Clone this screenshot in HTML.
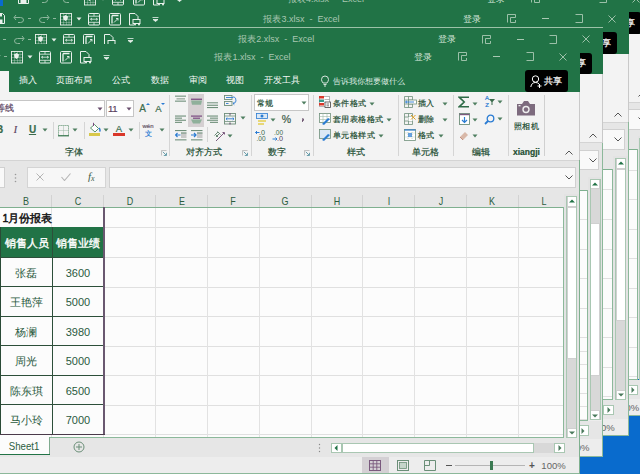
<!DOCTYPE html><html><head><meta charset="utf-8"><style>
html,body{margin:0;padding:0;}
body{width:640px;height:474px;overflow:hidden;position:relative;background:#096bcd;font-family:"Liberation Sans",sans-serif;}
.w{position:absolute;left:0;top:0;width:640px;height:474px;}
.clip{position:absolute;overflow:hidden;}
.clip div,.clip svg{position:absolute;}
.t{white-space:nowrap;}
.rb .t{-webkit-text-stroke:0.2px currentColor;}
</style></head><body><div class="clip" style="left:3.200000000000003px;top:-13.799999999999997px;width:649.8px;height:430.2px"><div style="left:70.3px;top:-44px;width:640px;height:474px"><div style="left:-200px;top:44px;width:779.5px;height:47.5px;background:#217346"></div><svg style="left:-36px;top:50px;" width="12" height="12" viewBox="0 0 12 12"><path d="M3 3 L1 5.5 L3 8 M1.2 5.5 H7.5 Q10.5 5.5 10.5 8 Q10.5 10.5 7.5 10.5 H5" fill="none" stroke="#8fb89e" stroke-width="1"/></svg><svg style="left:-11px;top:50px;" width="12" height="12" viewBox="0 0 12 12"><path d="M9 3 L11 5.5 L9 8 M10.8 5.5 H4.5 Q1.5 5.5 1.5 8 Q1.5 10.5 4.5 10.5 H7" fill="none" stroke="#8fb89e" stroke-width="1"/></svg><svg style="left:-21px;top:56px;" width="4" height="2" viewBox="0 0 4 2"><rect width="3" height="1" fill="#8fb89e"/></svg><svg style="left:-55.5px;top:51px;" width="11" height="11" viewBox="0 0 11 11"><path d="M0.5 0.5H8.5L10.5 2.5V10.5H0.5Z" fill="none" stroke="#e9f1ec"/><rect x="3" y="0.5" width="5" height="3" fill="#e9f1ec"/><rect x="2.5" y="6.5" width="6" height="4" fill="#e9f1ec"/></svg><svg style="left:4px;top:56px;" width="4" height="2" viewBox="0 0 4 2"><rect width="3" height="1" fill="#8fb89e"/></svg><svg style="left:11px;top:51px;" width="13" height="13" viewBox="0 0 13 13"><rect x="0.5" y="0.5" width="11" height="11.5" fill="none" stroke="#e9f1ec" stroke-width="0.9"/><path d="M0.5 3.5H11.5M0.5 6.5H11.5M0.5 9.5H11.5M3.5 0.5V12M6.5 0.5V12M9 0.5V12" stroke="#e9f1ec" stroke-width="0.6" stroke-dasharray="1 1"/><path d="M3 3.5L5.5 2L8 3.5L7.5 6.5L5.5 8L3.5 6.5Z" fill="#e9f1ec"/></svg><svg style="left:27px;top:55px;" width="6" height="4" viewBox="0 0 6 4"><path d="M0.5 0.5 L5.5 0.5 L3 3.5 Z" fill="#e9f1ec"/></svg><svg style="left:39px;top:51px;" width="12" height="13" viewBox="0 0 12 13"><rect x="0.5" y="0.5" width="11" height="11.5" rx="1" fill="none" stroke="#e9f1ec"/><path d="M0.5 3.2H11.5M0.5 9.3H11.5M6 0.5V3.2M6 9.3V12" stroke="#e9f1ec" stroke-width="0.8"/><path d="M2.5 6.2H9.5M4 5L2.5 6.2L4 7.4M8 5L9.5 6.2L8 7.4" stroke="#e9f1ec" stroke-width="0.8" fill="none"/></svg><svg style="left:59.5px;top:51px;" width="12" height="13" viewBox="0 0 12 13"><rect x="0.5" y="0.5" width="11" height="11.5" rx="1" fill="none" stroke="#e9f1ec"/><path d="M3 2.5V10.5M3 2.5H9.5" stroke="#e9f1ec" stroke-width="1.3" fill="none"/><path d="M5 9.5L9 5.5M7 5.5H9V7.5" stroke="#e9f1ec" stroke-width="0.9" fill="none"/></svg><svg style="left:80px;top:51px;" width="12" height="13" viewBox="0 0 12 13"><path d="M0.5 0.5H6L9 3.5V6M0.5 0.5V12H5" fill="none" stroke="#e9f1ec"/><rect x="4" y="6.5" width="7" height="4" fill="none" stroke="#e9f1ec"/><circle cx="6" cy="11.5" r="1" fill="#e9f1ec"/><circle cx="10" cy="11.5" r="1" fill="#e9f1ec"/></svg><svg style="left:103px;top:55px;" width="7" height="5" viewBox="0 0 7 5"><path d="M0.5 0.5H6.5M1 2.5L3.5 4.5L6 2.5Z" stroke="#e9f1ec" stroke-width="0.8" fill="#e9f1ec"/></svg><div class="t" style="left:152.5px;width:200px;text-align:center;top:50.5px;line-height:13px;font-size:9px;color:#a9c7b2;">报表4.xlsx&nbsp; -&nbsp; Excel</div><div class="t" style="left:323px;width:200px;text-align:center;top:50.5px;line-height:13px;font-size:9px;color:#d5e5da;">登录</div><svg style="left:458px;top:52px;" width="10" height="9" viewBox="0 0 10 9"><path d="M0.5 8.5V0.5H8.5V3.5H3.5V8.5H8.5V6" fill="none" stroke="#a9c8b3" stroke-width="0.9"/></svg><div style="left:493px;top:56px;width:7px;height:1px;background:#a9c8b3"></div><svg style="left:525.5px;top:52px;" width="8" height="9" viewBox="0 0 8 9"><path d="M0.5 0.5H7.5V8.5H0.5" fill="none" stroke="#a9c8b3" stroke-width="0.9"/></svg><svg style="left:558.5px;top:52.5px;" width="8" height="8" viewBox="0 0 8 8"><path d="M0.5 0.5L7.5 7.5M7.5 0.5L0.5 7.5" stroke="#a9c8b3" stroke-width="0.9"/></svg><div style="left:-200px;top:70.5px;width:208.8px;height:21px;background:#f3f3f3"></div><div class="t" style="left:-72.0px;width:200px;text-align:center;top:74.3px;line-height:13px;font-size:9px;color:#f2f7f4;">插入</div><div class="t" style="left:-25.625px;width:200px;text-align:center;top:74.3px;line-height:13px;font-size:9px;color:#f2f7f4;">页面布局</div><div class="t" style="left:21.25px;width:200px;text-align:center;top:74.3px;line-height:13px;font-size:9px;color:#f2f7f4;">公式</div><div class="t" style="left:59.875px;width:200px;text-align:center;top:74.3px;line-height:13px;font-size:9px;color:#f2f7f4;">数据</div><div class="t" style="left:97.75px;width:200px;text-align:center;top:74.3px;line-height:13px;font-size:9px;color:#f2f7f4;">审阅</div><div class="t" style="left:135.375px;width:200px;text-align:center;top:74.3px;line-height:13px;font-size:9px;color:#f2f7f4;">视图</div><div class="t" style="left:182.25px;width:200px;text-align:center;top:74.3px;line-height:13px;font-size:9px;color:#f2f7f4;">开发工具</div><svg style="left:320.5px;top:74.5px;" width="8" height="12" viewBox="0 0 8 12"><path d="M2 8 Q0.5 6 0.5 4.5 A3.5 3.5 0 0 1 7.5 4.5 Q7.5 6 6 8 Z M2.5 9.5H5.5M3 11H5" fill="none" stroke="#e9f1ec" stroke-width="0.9"/></svg><div class="t" style="left:332.8px;top:74.64999999999999px;line-height:12.3px;font-size:8.3px;color:#dfeae2;">告诉我你想要做什么</div><div style="left:525px;top:70px;width:43px;height:21.8px;background:#000;border-radius:3px"></div><svg style="left:530px;top:75px;" width="13" height="13" viewBox="0 0 13 13"><circle cx="5.5" cy="4" r="3.2" fill="none" stroke="#fff" stroke-width="1"/><path d="M0.8 12 Q1.5 7.5 5.5 7.5 Q8 7.5 9 9" fill="none" stroke="#fff" stroke-width="1"/><path d="M9.5 9V13M7.5 11H11.5" stroke="#fff" stroke-width="1"/></svg><div class="t" style="left:544px;top:74.5px;line-height:13px;font-size:9px;color:#f4f4f4;-webkit-text-stroke:0.2px #fff">共享</div><div style="left:-200px;top:91.5px;width:779.5px;height:68px;background:#f3f3f3"></div><div style="left:-200px;top:159.5px;width:779.5px;height:1px;background:#d4d4d4"></div><div class="rb" style="left:0;top:0"><div style="left:-200px;top:100.2px;width:305px;height:16.4px;background:#fff;border:1px solid #c6c6c6;box-sizing:border-box"></div><div class="t" style="left:-4.5px;top:101.8px;line-height:13px;font-size:9px;color:#5a3f5e;">等线</div><svg style="left:97px;top:106.5px;" width="6" height="4" viewBox="0 0 6 4"><path d="M0.5 0.5 L5.5 0.5 L3 3.5 Z" fill="#6a4f6e"/></svg><div style="left:105.8px;top:100.2px;width:28.6px;height:16.4px;background:#fff;border:1px solid #c6c6c6;box-sizing:border-box"></div><div class="t" style="left:108px;top:101.75px;line-height:13.5px;font-size:9.5px;color:#5a3f5e;letter-spacing:-0.3px">11</div><svg style="left:126px;top:106.5px;" width="6" height="4" viewBox="0 0 6 4"><path d="M0.5 0.5 L5.5 0.5 L3 3.5 Z" fill="#6a4f6e"/></svg><div class="t" style="left:42.5px;width:200px;text-align:center;top:101.5px;line-height:14px;font-size:10px;color:#3b6b4c;">A</div><svg style="left:146px;top:102.5px;" width="4" height="2" viewBox="0 0 4 2"><path d="M0 2L2 0L4 2Z" fill="#2b7cd3"/></svg><div class="t" style="left:58.30000000000001px;width:200px;text-align:center;top:102.05px;line-height:13.5px;font-size:9.5px;color:#3b6b4c;">A</div><svg style="left:161px;top:102.5px;" width="4" height="2" viewBox="0 0 4 2"><path d="M0 0L2 2L4 0Z" fill="#2b7cd3"/></svg><div class="t" style="left:-100.5px;width:200px;text-align:center;top:123.0px;line-height:14px;font-size:10px;color:#3b6b4c;font-weight:bold">B</div><div class="t" style="left:-84.5px;width:200px;text-align:center;top:123.0px;line-height:14px;font-size:10px;color:#5a3f5e;font-style:italic;font-family:Liberation Serif,serif">I</div><div class="t" style="left:-67.5px;width:200px;text-align:center;top:122.5px;line-height:14px;font-size:10px;color:#3b6b4c;font-weight:bold"><u>U</u></div><svg style="left:41.5px;top:128px;" width="6" height="4" viewBox="0 0 6 4"><path d="M0.5 0.5 L5.5 0.5 L3 3.5 Z" fill="#4f7f60"/></svg><div style="left:52.5px;top:122px;width:1px;height:17px;background:#d5d5d5"></div><svg style="left:58px;top:124.5px;" width="11" height="12" viewBox="0 0 11 12"><rect x="0.5" y="0.5" width="10" height="10" fill="none" stroke="#6a9a7a" stroke-dasharray="1.2 0.8"/><path d="M5.5 0.5V10.5M0.5 5.5H10.5" stroke="#9ab8a5" stroke-dasharray="1 1"/><path d="M0 10.8H11" stroke="#3b7a52" stroke-width="1.2"/></svg><svg style="left:72px;top:128px;" width="6" height="4" viewBox="0 0 6 4"><path d="M0.5 0.5 L5.5 0.5 L3 3.5 Z" fill="#4f7f60"/></svg><div style="left:83.5px;top:122px;width:1px;height:17px;background:#d5d5d5"></div><svg style="left:89px;top:121.5px;" width="12" height="11" viewBox="0 0 12 11"><path d="M1.5 6L5.5 2.5L9.5 6.5L6 10L1.5 6Z" fill="#fff" stroke="#4a8a5a" stroke-width="0.9"/><path d="M4.5 4V0.8" stroke="#7a4a80" stroke-width="1"/><path d="M10 6Q11.8 8 10.5 9.5" stroke="#2b7cd3" fill="none" stroke-width="1.4"/></svg><div style="left:88.6px;top:133.2px;width:11.5px;height:2.6px;background:#d8c84a"></div><svg style="left:103px;top:128px;" width="6" height="4" viewBox="0 0 6 4"><path d="M0.5 0.5 L5.5 0.5 L3 3.5 Z" fill="#4f7f60"/></svg><div class="t" style="left:19px;width:200px;text-align:center;top:122.05000000000001px;line-height:13.5px;font-size:9.5px;color:#3b6b4c;">A</div><div style="left:113px;top:133.2px;width:11.6px;height:2.6px;background:#d9372a"></div><svg style="left:127.5px;top:128px;" width="6" height="4" viewBox="0 0 6 4"><path d="M0.5 0.5 L5.5 0.5 L3 3.5 Z" fill="#4f7f60"/></svg><div style="left:138.6px;top:122px;width:1px;height:17px;background:#d5d5d5"></div><div class="t" style="left:48px;width:200px;text-align:center;top:121.0px;line-height:10px;font-size:6px;color:#6b5a6b;">wén</div><div class="t" style="left:48px;width:200px;text-align:center;top:127.5px;line-height:11px;font-size:7px;color:#2b7cd3;">文</div><svg style="left:158.5px;top:128px;" width="6" height="4" viewBox="0 0 6 4"><path d="M0.5 0.5 L5.5 0.5 L3 3.5 Z" fill="#4f7f60"/></svg><div class="t" style="left:-26.5px;width:200px;text-align:center;top:145.8px;line-height:13px;font-size:9px;color:#244f34;">字体</div><svg style="left:160.5px;top:149.5px;" width="6" height="6" viewBox="0 0 6 6"><path d="M0.5 5.5V0.5H5.5" fill="none" stroke="#aaa" stroke-width="0.7"/><path d="M1.8 1.8L5 5M2.8 5.5H5.5V2.8" fill="none" stroke="#4a8a9a" stroke-width="0.8"/></svg><div style="left:169.4px;top:95px;width:1px;height:61px;background:#d5d5d5"></div><div style="left:188px;top:94px;width:16px;height:32.7px;background:#d5d0d2"></div><svg style="left:175px;top:95px;" width="12" height="8" viewBox="0 0 12 8"><rect x="0" y="0.6" width="11" height="1.1" fill="#6f8f7b"/><rect x="1.5" y="3" width="8.5" height="1.6" fill="#aab8ae"/><rect x="0" y="5.6" width="11" height="1.1" fill="#6f8f7b"/></svg><svg style="left:191px;top:98px;" width="12" height="8" viewBox="0 0 12 8"><rect x="0" y="0.6" width="11" height="1.3" fill="#7a4a80"/><path d="M0 2.5H11L10 6.8H1Z" fill="#8fb09b"/></svg><svg style="left:207px;top:102px;" width="12" height="7" viewBox="0 0 12 7"><rect x="0" y="0.3" width="11" height="1" fill="#6f8f7b"/><rect x="0" y="2.7" width="11" height="1.1" fill="#6f8f7b"/><rect x="0" y="5" width="11" height="1.1" fill="#6f8f7b"/></svg><svg style="left:224px;top:95px;" width="13" height="12" viewBox="0 0 13 12"><rect x="0.5" y="0.5" width="7.5" height="4" fill="none" stroke="#6f8f7b" stroke-width="0.9"/><rect x="0.5" y="6.5" width="7.5" height="4" fill="none" stroke="#6f8f7b" stroke-width="0.9"/><path d="M2 2.5H9.5M2 8.5H4.5M9.5 1.5Q12.3 2.5 12 6Q11.5 8.5 9 8.5M10.3 7.3L9 8.5L10.3 9.7" fill="none" stroke="#2b7cd3" stroke-width="0.9"/></svg><svg style="left:175px;top:114.5px;" width="12" height="9" viewBox="0 0 12 9"><rect x="0" y="0.5" width="11" height="1.1" fill="#6f8f7b"/><rect x="0" y="2.6" width="7" height="1.1" fill="#6f8f7b"/><rect x="0" y="4.7" width="11" height="1.1" fill="#6f8f7b"/><rect x="0" y="6.8" width="7" height="1.1" fill="#6f8f7b"/></svg><svg style="left:191px;top:114.5px;" width="12" height="9" viewBox="0 0 12 9"><rect x="0" y="0.5" width="11" height="1.2" fill="#7a4a80"/><rect x="2" y="2.6" width="7" height="1.2" fill="#7a4a80"/><path d="M0 4.5H11L9 8.5H2Z" fill="#8fb09b"/></svg><svg style="left:207px;top:114.5px;" width="12" height="9" viewBox="0 0 12 9"><rect x="0" y="0.5" width="11" height="1.1" fill="#6f8f7b"/><rect x="3" y="2.6" width="8" height="1.1" fill="#6f8f7b"/><rect x="0" y="4.7" width="11" height="1.1" fill="#6f8f7b"/><rect x="3" y="6.8" width="8" height="1.1" fill="#6f8f7b"/></svg><svg style="left:224px;top:112.5px;" width="12" height="12" viewBox="0 0 12 12"><rect x="0.5" y="0.5" width="11" height="10.5" fill="none" stroke="#6f8f7b" stroke-width="0.9"/><path d="M0.5 3H11.5M0.5 8.5H11.5M6 0.5V3M6 8.5V11" stroke="#6f8f7b" stroke-width="0.8"/><path d="M2 5.8H10M3.3 4.6L2 5.8L3.3 7M8.7 4.6L10 5.8L8.7 7" fill="none" stroke="#2b7cd3" stroke-width="0.9"/><rect x="5.5" y="0" width="1" height="1.5" fill="#7a4a80"/><rect x="5.5" y="10" width="1" height="1.5" fill="#7a4a80"/></svg><svg style="left:239.5px;top:116px;" width="6" height="4" viewBox="0 0 6 4"><path d="M0.5 0.5 L5.5 0.5 L3 3.5 Z" fill="#4f7f60"/></svg><svg style="left:174.5px;top:130px;" width="12" height="11" viewBox="0 0 12 11"><rect x="0" y="0" width="11.5" height="1.1" fill="#6f8f7b"/><rect x="0" y="9.3" width="11.5" height="1.1" fill="#6f8f7b"/><rect x="6" y="2.5" width="5.5" height="5.5" fill="#c9c9c9"/><rect x="6" y="2.5" width="5.5" height="1" fill="#6f8f7b"/><path d="M0.5 5H5.5M2.5 3L0.5 5L2.5 7" fill="none" stroke="#2b7cd3" stroke-width="1.2"/></svg><svg style="left:190.5px;top:130px;" width="12" height="11" viewBox="0 0 12 11"><rect x="0" y="0" width="11.5" height="1.1" fill="#6f8f7b"/><rect x="0" y="9.3" width="11.5" height="1.1" fill="#6f8f7b"/><rect x="6" y="2.5" width="5.5" height="5.5" fill="#c9c9c9"/><rect x="6" y="2.5" width="5.5" height="1" fill="#6f8f7b"/><path d="M0 5H5M3 3L5 5L3 7" fill="none" stroke="#2b7cd3" stroke-width="1.2"/></svg><div style="left:207px;top:127px;width:1px;height:15px;background:#d5d5d5"></div><svg style="left:212.5px;top:129px;" width="13" height="13" viewBox="0 0 13 13"><path d="M1.5 6.5L5 3M3 8L6.5 4.5M4.5 2.5L7.5 5.5M2 5L5 8" fill="none" stroke="#6a8a76" stroke-width="1"/><path d="M3 12L11 4M9.5 3.5H11.5V5.5" fill="none" stroke="#7a5a7e" stroke-width="1"/></svg><svg style="left:226.5px;top:134px;" width="6" height="4" viewBox="0 0 6 4"><path d="M0.5 0.5 L5.5 0.5 L3 3.5 Z" fill="#4f7f60"/></svg><div class="t" style="left:104.30000000000001px;width:200px;text-align:center;top:145.8px;line-height:13px;font-size:9px;color:#244f34;">对齐方式</div><svg style="left:242px;top:149.5px;" width="6" height="6" viewBox="0 0 6 6"><path d="M0.5 5.5V0.5H5.5" fill="none" stroke="#aaa" stroke-width="0.7"/><path d="M1.8 1.8L5 5M2.8 5.5H5.5V2.8" fill="none" stroke="#4a8a9a" stroke-width="0.8"/></svg><div style="left:250.6px;top:95px;width:1px;height:61px;background:#d5d5d5"></div><div style="left:254.4px;top:94.3px;width:55.1px;height:16.4px;background:#fff;border:1px solid #c6c6c6;box-sizing:border-box"></div><div class="t" style="left:256.5px;top:96.6px;line-height:12.4px;font-size:8.4px;color:#244f34;letter-spacing:0.5px">常规</div><svg style="left:301px;top:101px;" width="6" height="4" viewBox="0 0 6 4"><path d="M0.5 0.5 L5.5 0.5 L3 3.5 Z" fill="#4f7f60"/></svg><svg style="left:256px;top:113px;" width="12" height="12" viewBox="0 0 12 12"><rect x="0.5" y="0.5" width="11" height="5" fill="#dbe8f5" stroke="#2b7cd3" stroke-width="0.8"/><circle cx="6" cy="3" r="1.5" fill="#2b7cd3"/><rect x="2" y="7" width="8" height="2" fill="#e8d878"/><rect x="2" y="10" width="6" height="2" fill="#e8d878"/></svg><svg style="left:270px;top:117.5px;" width="6" height="4" viewBox="0 0 6 4"><path d="M0.5 0.5 L5.5 0.5 L3 3.5 Z" fill="#4f7f60"/></svg><div class="t" style="left:186.5px;width:200px;text-align:center;top:112.25px;line-height:14.5px;font-size:10.5px;color:#3b5a48;">%</div><svg style="left:300.5px;top:117.5px;" width="3" height="4" viewBox="0 0 3 4"><path d="M1.5 0.5A1 1 0 0 1 2.5 1.5Q2.5 3 1 3.8" fill="#5a3f5e" stroke="#5a3f5e" stroke-width="0.8"/></svg><svg style="left:255px;top:129px;" width="13" height="13" viewBox="0 0 13 13"><text x="4" y="5.8" font-size="6.5" fill="#3b6b4c" font-family="Liberation Sans" textLength="6" lengthAdjust="spacingAndGlyphs">.0</text><text x="1.5" y="12" font-size="6.5" fill="#3b6b4c" font-family="Liberation Sans" textLength="9" lengthAdjust="spacingAndGlyphs">.00</text><path d="M0.5 3.5H4.5M2 2L0.5 3.5L2 5" stroke="#2b7cd3" fill="none" stroke-width="1"/></svg><svg style="left:272px;top:129px;" width="13" height="13" viewBox="0 0 13 13"><text x="2" y="5.8" font-size="6.5" fill="#3b6b4c" font-family="Liberation Sans" textLength="9" lengthAdjust="spacingAndGlyphs">.00</text><text x="5" y="12" font-size="6.5" fill="#5a3f5e" font-family="Liberation Sans" textLength="6" lengthAdjust="spacingAndGlyphs">.0</text><path d="M0.5 10H5M3.5 8.5L5 10L3.5 11.5" stroke="#2b7cd3" fill="none" stroke-width="1"/></svg><div class="t" style="left:176.5px;width:200px;text-align:center;top:145.8px;line-height:13px;font-size:9px;color:#244f34;">数字</div><svg style="left:304px;top:149.5px;" width="6" height="6" viewBox="0 0 6 6"><path d="M0.5 5.5V0.5H5.5" fill="none" stroke="#aaa" stroke-width="0.7"/><path d="M1.8 1.8L5 5M2.8 5.5H5.5V2.8" fill="none" stroke="#4a8a9a" stroke-width="0.8"/></svg><div style="left:313.4px;top:95px;width:1px;height:61px;background:#d5d5d5"></div><svg style="left:318.5px;top:96px;" width="12" height="12" viewBox="0 0 12 12"><rect x="0.5" y="0.5" width="10" height="10" fill="#fff" stroke="#9a9a9a" stroke-width="0.7"/><rect x="0" y="0" width="5" height="2.5" fill="#d9372a"/><rect x="0" y="3.5" width="5" height="2.5" fill="#3a9a8a"/><rect x="0" y="7" width="5" height="2.5" fill="#d9372a"/><path d="M5.5 3.5H10.5M5.5 7H8" stroke="#9a9a9a" stroke-width="0.7"/><rect x="6" y="6" width="5.5" height="5.5" fill="#fff" stroke="#444" stroke-width="0.8"/><path d="M7.5 8H10M7.5 9.8H10" stroke="#444" stroke-width="0.7"/></svg><div class="t" style="left:332.7px;top:96.6px;line-height:12.4px;font-size:8.4px;color:#244f34;letter-spacing:0.5px">条件格式</div><svg style="left:368.5px;top:101.5px;" width="6" height="4" viewBox="0 0 6 4"><path d="M0.5 0.5 L5.5 0.5 L3 3.5 Z" fill="#4f7f60"/></svg><svg style="left:318.5px;top:113px;" width="12" height="12" viewBox="0 0 12 12"><rect x="0.5" y="0.5" width="11" height="9" fill="#fff" stroke="#6f8f7b" stroke-width="0.8"/><path d="M0.5 3.5H11.5M4 0.5V9.5M8 0.5V9.5M0.5 6.5H11.5" stroke="#9fb8a8" stroke-width="0.6"/><path d="M3 11L9 5L11 6L5 12Z" fill="#2b7cd3"/></svg><div class="t" style="left:332.7px;top:113.1px;line-height:12.4px;font-size:8.4px;color:#244f34;letter-spacing:0.5px">套用表格格式</div><svg style="left:385.5px;top:117.5px;" width="6" height="4" viewBox="0 0 6 4"><path d="M0.5 0.5 L5.5 0.5 L3 3.5 Z" fill="#4f7f60"/></svg><svg style="left:318.5px;top:129px;" width="12" height="12" viewBox="0 0 12 12"><rect x="0.5" y="0.5" width="11" height="9" fill="#dbe8f5" stroke="#6f8f7b" stroke-width="0.8"/><path d="M3 11L9 5L11 6L5 12Z" fill="#2b7cd3"/></svg><div class="t" style="left:332.7px;top:129.10000000000002px;line-height:12.4px;font-size:8.4px;color:#244f34;letter-spacing:0.5px">单元格样式</div><svg style="left:377.5px;top:133.5px;" width="6" height="4" viewBox="0 0 6 4"><path d="M0.5 0.5 L5.5 0.5 L3 3.5 Z" fill="#4f7f60"/></svg><div class="t" style="left:255.5px;width:200px;text-align:center;top:145.8px;line-height:13px;font-size:9px;color:#244f34;">样式</div><div style="left:397.6px;top:95px;width:1px;height:61px;background:#d5d5d5"></div><svg style="left:404px;top:96px;" width="13" height="12" viewBox="0 0 13 12"><path d="M0.5 0.5H8.5V11.5H0.5ZM0.5 4H8.5M0.5 8H8.5M4.5 0.5V11.5" fill="none" stroke="#6f8f7b" stroke-width="0.8"/><rect x="4.5" y="4" width="8" height="4" fill="#fff" stroke="#6f8f7b" stroke-width="0.8"/><path d="M1.5 6H10M3 4.8L1.5 6L3 7.2" stroke="#2b7cd3" fill="none" stroke-width="0.9"/></svg><div class="t" style="left:417.8px;top:96.6px;line-height:12.4px;font-size:8.4px;color:#244f34;letter-spacing:0.5px">插入</div><svg style="left:441.5px;top:101.5px;" width="6" height="4" viewBox="0 0 6 4"><path d="M0.5 0.5 L5.5 0.5 L3 3.5 Z" fill="#4f7f60"/></svg><svg style="left:404px;top:113px;" width="13" height="12" viewBox="0 0 13 12"><path d="M0.5 0.5H8.5V11.5H0.5ZM0.5 4H8.5M0.5 8H8.5M4.5 0.5V11.5" fill="none" stroke="#6f8f7b" stroke-width="0.8"/><rect x="4.5" y="4" width="4" height="4" fill="#fff"/><path d="M7 2L11.5 6.5M11.5 2L7 6.5" stroke="#e0a020" stroke-width="1"/></svg><div class="t" style="left:417.8px;top:113.1px;line-height:12.4px;font-size:8.4px;color:#244f34;letter-spacing:0.5px">删除</div><svg style="left:441.5px;top:117.5px;" width="6" height="4" viewBox="0 0 6 4"><path d="M0.5 0.5 L5.5 0.5 L3 3.5 Z" fill="#4f7f60"/></svg><svg style="left:404px;top:129px;" width="12" height="12" viewBox="0 0 12 12"><rect x="0.5" y="0.5" width="11" height="11" fill="#fff" stroke="#6f8f7b" stroke-width="0.8"/><path d="M0.5 1H11.5" stroke="#2b7cd3" stroke-width="1.2"/><path d="M4 1V11.5M8 1V11.5M0.5 4H11.5M0.5 8H11.5" stroke="#9fb8a8" stroke-width="0.6" stroke-dasharray="1 1"/><rect x="4" y="4" width="4" height="4" fill="#2b7cd3" opacity="0.7"/></svg><div class="t" style="left:417.8px;top:129.10000000000002px;line-height:12.4px;font-size:8.4px;color:#244f34;letter-spacing:0.5px">格式</div><svg style="left:437.5px;top:133.5px;" width="6" height="4" viewBox="0 0 6 4"><path d="M0.5 0.5 L5.5 0.5 L3 3.5 Z" fill="#4f7f60"/></svg><div class="t" style="left:325.8px;width:200px;text-align:center;top:145.8px;line-height:13px;font-size:9px;color:#244f34;">单元格</div><div style="left:452.5px;top:95px;width:1px;height:61px;background:#d5d5d5"></div><svg style="left:457.5px;top:96px;" width="12" height="12" viewBox="0 0 12 12"><path d="M11 1.2H1.2L6.2 6L1.2 10.8H11" fill="none" stroke="#2e6b47" stroke-width="1.6"/></svg><svg style="left:472px;top:101.5px;" width="6" height="4" viewBox="0 0 6 4"><path d="M0.5 0.5 L5.5 0.5 L3 3.5 Z" fill="#4f7f60"/></svg><svg style="left:458.5px;top:112.5px;" width="12" height="12" viewBox="0 0 12 12"><rect x="0.5" y="0.5" width="10" height="11" fill="#fff" stroke="#6f8f7b" stroke-width="0.9"/><path d="M0.5 1.5H10.5" stroke="#7a5a7e" stroke-width="1.4"/><path d="M5.5 4V9.5M3 7L5.5 9.5L8 7" stroke="#2b7cd3" fill="none" stroke-width="1.2"/></svg><svg style="left:471.5px;top:117.5px;" width="6" height="4" viewBox="0 0 6 4"><path d="M0.5 0.5 L5.5 0.5 L3 3.5 Z" fill="#4f7f60"/></svg><svg style="left:459px;top:130px;" width="11" height="10" viewBox="0 0 11 10"><path d="M1 7L6 2L9 5L4 10Z" fill="#d8b8a8"/><path d="M1 7L4 10" stroke="#c49080"/></svg><svg style="left:471.5px;top:134px;" width="6" height="4" viewBox="0 0 6 4"><path d="M0.5 0.5 L5.5 0.5 L3 3.5 Z" fill="#4f7f60"/></svg><div class="t" style="left:387px;width:200px;text-align:center;top:92.5px;line-height:10px;font-size:6px;color:#2b7cd3;">A</div><div class="t" style="left:387px;width:200px;text-align:center;top:99.5px;line-height:10px;font-size:6px;color:#2b7cd3;">Z</div><svg style="left:489px;top:99px;" width="6" height="6" viewBox="0 0 6 6"><path d="M0 0H6L3.5 3V6H2.5V3Z" fill="#3b6b4c"/></svg><svg style="left:496.5px;top:100px;" width="6" height="4" viewBox="0 0 6 4"><path d="M0.5 0.5 L5.5 0.5 L3 3.5 Z" fill="#4f7f60"/></svg><svg style="left:484px;top:113.5px;" width="11" height="11" viewBox="0 0 11 11"><circle cx="6.5" cy="4.5" r="3.3" fill="none" stroke="#2b7cd3" stroke-width="1.3"/><path d="M4 7L1 10" stroke="#2b7cd3" stroke-width="1.8"/></svg><svg style="left:496.5px;top:117px;" width="6" height="4" viewBox="0 0 6 4"><path d="M0.5 0.5 L5.5 0.5 L3 3.5 Z" fill="#4f7f60"/></svg><div class="t" style="left:380.5px;width:200px;text-align:center;top:145.8px;line-height:13px;font-size:9px;color:#244f34;">编辑</div><div style="left:508px;top:95px;width:1px;height:61px;background:#d5d5d5"></div><svg style="left:516px;top:99.5px;" width="20" height="16" viewBox="0 0 20 16"><path d="M1 4H6L8 1H12L14 4H19V15.5H1Z" fill="#7d6b7e"/><circle cx="10" cy="9.5" r="3.7" fill="#eee"/><circle cx="10" cy="9.5" r="2.2" fill="#7d6b7e"/><rect x="2.5" y="5" width="2" height="1.3" fill="#eee"/></svg><div class="t" style="left:426.5px;width:200px;text-align:center;top:119.8px;line-height:12.4px;font-size:8.4px;color:#244f34;letter-spacing:0.5px">照相机</div><div class="t" style="left:426.5px;width:200px;text-align:center;top:146.05px;line-height:12.5px;font-size:8.5px;color:#244f34;font-weight:bold">xiangji</div><div style="left:544px;top:95px;width:1px;height:61px;background:#d0d0d0"></div><svg style="left:565px;top:150px;" width="8" height="5" viewBox="0 0 8 5"><path d="M0.5 4.5L4 1L7.5 4.5" fill="none" stroke="#555" stroke-width="1"/></svg></div><div style="left:-200px;top:160.5px;width:779.5px;height:47px;background:#e6e6e6"></div><div style="left:-200px;top:167px;width:204.5px;height:20.6px;background:#f9f9f9;border:1px solid #d0d0d0;box-sizing:border-box"></div><svg style="left:14px;top:173px;" width="3" height="10" viewBox="0 0 3 10"><circle cx="1.5" cy="1.5" r="0.8" fill="#999"/><circle cx="1.5" cy="5" r="0.8" fill="#999"/><circle cx="1.5" cy="8.5" r="0.8" fill="#999"/></svg><div style="left:27px;top:167px;width:78.5px;height:20.6px;background:#f7f7f7;border:1px solid #d4d4d4;box-sizing:border-box"></div><svg style="left:36px;top:173px;" width="8" height="8" viewBox="0 0 8 8"><path d="M0.5 0.5L7.5 7.5M7.5 0.5L0.5 7.5" stroke="#b5b5b5"/></svg><svg style="left:61px;top:173px;" width="10" height="8" viewBox="0 0 10 8"><path d="M0.5 4L3.5 7.5L9.5 0.5" fill="none" stroke="#b5b5b5" stroke-width="1.1"/></svg><div class="t" style="left:88px;top:169.0px;line-height:15px;font-size:11px;color:#3e5e4a;font-family:Liberation Serif,serif"><i>f</i><span style="font-size:8px;position:relative;top:1px"><i>x</i></span></div><div style="left:108.5px;top:167px;width:467px;height:20.6px;background:#f9f9f9;border:1px solid #d0d0d0;box-sizing:border-box"></div><svg style="left:565px;top:175px;" width="8" height="5" viewBox="0 0 8 5"><path d="M0.5 0.5L4 4L7.5 0.5" fill="none" stroke="#555" stroke-width="1"/></svg><div class="t" style="left:-126.0px;width:200px;text-align:center;top:193.55px;line-height:15.5px;font-size:11.5px;color:#2c5e3f;transform:scaleX(0.78)">A</div><div style="left:-0.6px;top:195px;width:1px;height:12px;background:#d2d2d2"></div><div class="t" style="left:-74.0px;width:200px;text-align:center;top:193.55px;line-height:15.5px;font-size:11.5px;color:#2c5e3f;transform:scaleX(0.78)">B</div><div style="left:51.4px;top:195px;width:1px;height:12px;background:#d2d2d2"></div><div class="t" style="left:-22.099999999999994px;width:200px;text-align:center;top:193.55px;line-height:15.5px;font-size:11.5px;color:#2c5e3f;transform:scaleX(0.78)">C</div><div style="left:103.2px;top:195px;width:1px;height:12px;background:#d2d2d2"></div><div class="t" style="left:29.650000000000006px;width:200px;text-align:center;top:193.55px;line-height:15.5px;font-size:11.5px;color:#2c5e3f;transform:scaleX(0.78)">D</div><div style="left:154.9px;top:195px;width:1px;height:12px;background:#d2d2d2"></div><div class="t" style="left:81.5px;width:200px;text-align:center;top:193.55px;line-height:15.5px;font-size:11.5px;color:#2c5e3f;transform:scaleX(0.78)">E</div><div style="left:206.9px;top:195px;width:1px;height:12px;background:#d2d2d2"></div><div class="t" style="left:133.4px;width:200px;text-align:center;top:193.55px;line-height:15.5px;font-size:11.5px;color:#2c5e3f;transform:scaleX(0.78)">F</div><div style="left:258.7px;top:195px;width:1px;height:12px;background:#d2d2d2"></div><div class="t" style="left:185.25px;width:200px;text-align:center;top:193.55px;line-height:15.5px;font-size:11.5px;color:#2c5e3f;transform:scaleX(0.78)">G</div><div style="left:310.59999999999997px;top:195px;width:1px;height:12px;background:#d2d2d2"></div><div class="t" style="left:237.0px;width:200px;text-align:center;top:193.55px;line-height:15.5px;font-size:11.5px;color:#2c5e3f;transform:scaleX(0.78)">H</div><div style="left:362.2px;top:195px;width:1px;height:12px;background:#d2d2d2"></div><div class="t" style="left:288.65px;width:200px;text-align:center;top:193.55px;line-height:15.5px;font-size:11.5px;color:#2c5e3f;transform:scaleX(0.78)">I</div><div style="left:413.9px;top:195px;width:1px;height:12px;background:#d2d2d2"></div><div class="t" style="left:340.55px;width:200px;text-align:center;top:193.55px;line-height:15.5px;font-size:11.5px;color:#2c5e3f;transform:scaleX(0.78)">J</div><div style="left:466.0px;top:195px;width:1px;height:12px;background:#d2d2d2"></div><div class="t" style="left:392.45px;width:200px;text-align:center;top:193.55px;line-height:15.5px;font-size:11.5px;color:#2c5e3f;transform:scaleX(0.78)">K</div><div style="left:517.6999999999999px;top:195px;width:1px;height:12px;background:#d2d2d2"></div><div class="t" style="left:444.15px;width:200px;text-align:center;top:193.55px;line-height:15.5px;font-size:11.5px;color:#2c5e3f;transform:scaleX(0.78)">L</div><div style="left:569.4px;top:195px;width:1px;height:12px;background:#d2d2d2"></div><div style="left:-200px;top:207.4px;width:763.5px;height:230px;background:#fcfcfc"></div><div style="left:-200px;top:227.4px;width:763.5px;height:1px;background:#e0e0e0"></div><div style="left:-200px;top:257px;width:763.5px;height:1px;background:#e0e0e0"></div><div style="left:-200px;top:286.5px;width:763.5px;height:1px;background:#e0e0e0"></div><div style="left:-200px;top:316px;width:763.5px;height:1px;background:#e0e0e0"></div><div style="left:-200px;top:345.5px;width:763.5px;height:1px;background:#e0e0e0"></div><div style="left:-200px;top:375px;width:763.5px;height:1px;background:#e0e0e0"></div><div style="left:-200px;top:404.6px;width:763.5px;height:1px;background:#e0e0e0"></div><div style="left:-200px;top:434px;width:763.5px;height:1px;background:#e0e0e0"></div><div style="left:-0.6px;top:207.4px;width:1px;height:230px;background:#e2e2e2"></div><div style="left:51.4px;top:207.4px;width:1px;height:230px;background:#e2e2e2"></div><div style="left:103.2px;top:207.4px;width:1px;height:230px;background:#e2e2e2"></div><div style="left:154.9px;top:207.4px;width:1px;height:230px;background:#e2e2e2"></div><div style="left:206.9px;top:207.4px;width:1px;height:230px;background:#e2e2e2"></div><div style="left:258.7px;top:207.4px;width:1px;height:230px;background:#e2e2e2"></div><div style="left:310.59999999999997px;top:207.4px;width:1px;height:230px;background:#e2e2e2"></div><div style="left:362.2px;top:207.4px;width:1px;height:230px;background:#e2e2e2"></div><div style="left:413.9px;top:207.4px;width:1px;height:230px;background:#e2e2e2"></div><div style="left:466.0px;top:207.4px;width:1px;height:230px;background:#e2e2e2"></div><div style="left:517.6999999999999px;top:207.4px;width:1px;height:230px;background:#e2e2e2"></div><div style="left:-200px;top:207px;width:764px;height:1px;background:#7fb08f"></div><div style="left:563.2px;top:207px;width:1px;height:230.5px;background:#8cb89a"></div><div style="left:48.7px;top:437px;width:515.3px;height:1px;background:#8cb89a"></div><div class="t" style="left:2.5px;top:210.75px;line-height:14.5px;font-size:10.5px;color:#111;-webkit-text-stroke:0.45px #111">1月份报表</div><div style="left:-200px;top:227.4px;width:303.8px;height:29.6px;background:#217346"></div><div class="t" style="left:-73.5px;width:200px;text-align:center;top:235.6px;line-height:14.8px;font-size:10.8px;color:#fff;-webkit-text-stroke:0.35px #fff">销售人员</div><div class="t" style="left:-22px;width:200px;text-align:center;top:235.6px;line-height:14.8px;font-size:10.8px;color:#fff;-webkit-text-stroke:0.35px #fff">销售业绩</div><div style="left:-200px;top:257px;width:303.8px;height:29.5px;background:#fcfcfc"></div><div class="t" style="left:-74px;width:200px;text-align:center;top:265.75px;line-height:15px;font-size:11px;color:#2a5a3e;">张磊</div><div class="t" style="left:-22px;width:200px;text-align:center;top:265.75px;line-height:15px;font-size:11px;color:#2a5a3e;">3600</div><div style="left:-200px;top:286.5px;width:303.8px;height:29.5px;background:#fcfcfc"></div><div class="t" style="left:-74px;width:200px;text-align:center;top:295.25px;line-height:15px;font-size:11px;color:#2a5a3e;">王艳萍</div><div class="t" style="left:-22px;width:200px;text-align:center;top:295.25px;line-height:15px;font-size:11px;color:#2a5a3e;">5000</div><div style="left:-200px;top:316px;width:303.8px;height:29.5px;background:#fcfcfc"></div><div class="t" style="left:-74px;width:200px;text-align:center;top:324.75px;line-height:15px;font-size:11px;color:#2a5a3e;">杨澜</div><div class="t" style="left:-22px;width:200px;text-align:center;top:324.75px;line-height:15px;font-size:11px;color:#2a5a3e;">3980</div><div style="left:-200px;top:345.5px;width:303.8px;height:29.5px;background:#fcfcfc"></div><div class="t" style="left:-74px;width:200px;text-align:center;top:354.25px;line-height:15px;font-size:11px;color:#2a5a3e;">周光</div><div class="t" style="left:-22px;width:200px;text-align:center;top:354.25px;line-height:15px;font-size:11px;color:#2a5a3e;">5000</div><div style="left:-200px;top:375px;width:303.8px;height:29.600000000000023px;background:#fcfcfc"></div><div class="t" style="left:-74px;width:200px;text-align:center;top:383.8px;line-height:15px;font-size:11px;color:#2a5a3e;">陈东琪</div><div class="t" style="left:-22px;width:200px;text-align:center;top:383.8px;line-height:15px;font-size:11px;color:#2a5a3e;">6500</div><div style="left:-200px;top:404.6px;width:303.8px;height:29.399999999999977px;background:#fcfcfc"></div><div class="t" style="left:-74px;width:200px;text-align:center;top:413.3px;line-height:15px;font-size:11px;color:#2a5a3e;">马小玲</div><div class="t" style="left:-22px;width:200px;text-align:center;top:413.3px;line-height:15px;font-size:11px;color:#2a5a3e;">7000</div><div style="left:-200px;top:256.5px;width:304.3px;height:1px;background:#2d4f3a"></div><div style="left:-200px;top:286.0px;width:304.3px;height:1px;background:#2d4f3a"></div><div style="left:-200px;top:315.5px;width:304.3px;height:1px;background:#2d4f3a"></div><div style="left:-200px;top:345.0px;width:304.3px;height:1px;background:#2d4f3a"></div><div style="left:-200px;top:374.5px;width:304.3px;height:1px;background:#2d4f3a"></div><div style="left:-200px;top:404.1px;width:304.3px;height:1px;background:#2d4f3a"></div><div style="left:-200px;top:433.5px;width:304.3px;height:1px;background:#2d4f3a"></div><div style="left:103.4px;top:207.4px;width:1.2px;height:227px;background:#6a5870"></div><div style="left:51.8px;top:227.4px;width:1px;height:207px;background:#2d4f3a"></div><div style="left:-0.3px;top:227.4px;width:1.4px;height:207px;background:#2a4a36"></div><div style="left:-200px;top:433.5px;width:304.5px;height:1.4px;background:#4a3a4a"></div><div style="left:564.2px;top:194px;width:15.3px;height:243px;background:#e3e3e3"></div><div style="left:566.5px;top:196px;width:10px;height:10.5px;background:#fff;border:1px solid #cfcfcf;box-sizing:border-box"></div><svg style="left:568.5px;top:199px;" width="6" height="4" viewBox="0 0 6 4"><path d="M0 3.5L3 0.5L6 3.5Z" fill="#217346"/></svg><div style="left:566.5px;top:206.5px;width:10px;height:0.0px;background:#d8d8d8"></div><div style="left:566.5px;top:206.5px;width:10px;height:152.5px;background:#fff;border:1px solid #d0d0d0;box-sizing:border-box"></div><div style="left:566.5px;top:359px;width:10px;height:69px;background:#d8d8d8"></div><div style="left:566.5px;top:427.5px;width:10px;height:10px;background:#fff;border:1px solid #cfcfcf;box-sizing:border-box"></div><div style="left:565.8px;top:196px;width:11.4px;height:241.5px;border:1px solid #a9c7b2;box-sizing:border-box"></div><svg style="left:568.5px;top:431px;" width="6" height="4" viewBox="0 0 6 4"><path d="M0 0.5L3 3.5L6 0.5Z" fill="#4a7a5c"/></svg><div style="left:-200px;top:438px;width:779.5px;height:19.5px;background:#e6e6e6"></div><div style="left:-200px;top:435px;width:249px;height:20px;background:#fcfcfc"></div><div style="left:48.7px;top:437px;width:1.2px;height:18px;background:#7faa8e"></div><div style="left:-200px;top:453.5px;width:249.9px;height:1.5px;background:#217346"></div><div class="t" style="left:-76px;width:200px;text-align:center;top:438.75px;line-height:14.5px;font-size:10.5px;color:#2c5e3f;transform:scaleX(0.92)">Sheet1</div><svg style="left:73px;top:441px;" width="12" height="12" viewBox="0 0 12 12"><circle cx="6" cy="6" r="5" fill="none" stroke="#6b8f78" stroke-width="1"/><path d="M6 3V9M3 6H9" stroke="#6b8f78" stroke-width="1"/></svg><svg style="left:318px;top:443px;" width="3" height="10" viewBox="0 0 3 10"><circle cx="1.5" cy="1.5" r="0.7" fill="#888"/><circle cx="1.5" cy="5" r="0.7" fill="#888"/><circle cx="1.5" cy="8.5" r="0.7" fill="#888"/></svg><div style="left:331px;top:442.5px;width:10.5px;height:10.5px;background:#fff;border:1px solid #a9c7b2;box-sizing:border-box"></div><svg style="left:334px;top:445px;" width="4" height="6" viewBox="0 0 4 6"><path d="M3.5 0L0.5 3L3.5 6Z" fill="#217346"/></svg><div style="left:341.5px;top:442.5px;width:192px;height:10.5px;background:#fff;border:1px solid #a9c7b2;box-sizing:border-box"></div><div style="left:533.5px;top:442.5px;width:20px;height:10.5px;background:#d8d8d8"></div><div style="left:554px;top:442.5px;width:11px;height:10.5px;background:#fff;border:1px solid #a9c7b2;box-sizing:border-box"></div><svg style="left:557.5px;top:445px;" width="4" height="6" viewBox="0 0 4 6"><path d="M0.5 0L3.5 3L0.5 6Z" fill="#4a7a5c"/></svg><div style="left:-200px;top:456.8px;width:779.5px;height:17px;background:#ededed"></div><div style="left:-200px;top:473px;width:779.5px;height:1.2px;background:#8cb89a"></div><div style="left:362.2px;top:457px;width:26.6px;height:16px;background:#d4d0d4"></div><svg style="left:369px;top:460px;" width="12" height="11" viewBox="0 0 12 11"><rect x="0.5" y="0.5" width="11" height="10" fill="none" stroke="#7a5a7e"/><path d="M0.5 3.8H11.5M0.5 7.2H11.5M4.2 0.5V10.5M7.8 0.5V10.5" stroke="#7a5a7e" stroke-width="0.9"/></svg><svg style="left:397px;top:460px;" width="12" height="11" viewBox="0 0 12 11"><rect x="0.5" y="0.5" width="11" height="10" fill="none" stroke="#6b8f78"/><rect x="2.5" y="2.5" width="7" height="6" fill="#c5d5ca" stroke="#6b8f78" stroke-width="0.8"/></svg><svg style="left:424px;top:460px;" width="12" height="11" viewBox="0 0 12 11"><path d="M0.5 0.5H11.5V10.5H0.5ZM5.5 0.5V5.5H0.5" fill="none" stroke="#6b8f78"/></svg><div style="left:446px;top:465px;width:6px;height:1.2px;background:#555"></div><div style="left:455px;top:465px;width:70px;height:1px;background:#b5b5b5"></div><div style="left:489.5px;top:461px;width:3px;height:9px;background:#3b7a52"></div><div class="t" style="left:432px;width:200px;text-align:center;top:458.5px;line-height:14px;font-size:10px;color:#555;font-weight:bold">+</div><div class="t" style="left:453.5px;width:200px;text-align:center;top:458.75px;line-height:13.5px;font-size:9.5px;color:#666;">100%</div><div style="left:578.5px;top:91.5px;width:1.2px;height:68.5px;background:#c9c9c9"></div><div style="left:578.5px;top:160px;width:1.2px;height:314px;background:#8cb89a"></div></div></div><div class="clip" style="left:-21.299999999999997px;top:6px;width:649.8px;height:430.2px"><div style="left:70.3px;top:-44px;width:640px;height:474px"><div style="left:-200px;top:44px;width:779.5px;height:47.5px;background:#217346"></div><svg style="left:-36px;top:50px;" width="12" height="12" viewBox="0 0 12 12"><path d="M3 3 L1 5.5 L3 8 M1.2 5.5 H7.5 Q10.5 5.5 10.5 8 Q10.5 10.5 7.5 10.5 H5" fill="none" stroke="#8fb89e" stroke-width="1"/></svg><svg style="left:-11px;top:50px;" width="12" height="12" viewBox="0 0 12 12"><path d="M9 3 L11 5.5 L9 8 M10.8 5.5 H4.5 Q1.5 5.5 1.5 8 Q1.5 10.5 4.5 10.5 H7" fill="none" stroke="#8fb89e" stroke-width="1"/></svg><svg style="left:-21px;top:56px;" width="4" height="2" viewBox="0 0 4 2"><rect width="3" height="1" fill="#8fb89e"/></svg><svg style="left:-55.5px;top:51px;" width="11" height="11" viewBox="0 0 11 11"><path d="M0.5 0.5H8.5L10.5 2.5V10.5H0.5Z" fill="none" stroke="#e9f1ec"/><rect x="3" y="0.5" width="5" height="3" fill="#e9f1ec"/><rect x="2.5" y="6.5" width="6" height="4" fill="#e9f1ec"/></svg><svg style="left:4px;top:56px;" width="4" height="2" viewBox="0 0 4 2"><rect width="3" height="1" fill="#8fb89e"/></svg><svg style="left:11px;top:51px;" width="13" height="13" viewBox="0 0 13 13"><rect x="0.5" y="0.5" width="11" height="11.5" fill="none" stroke="#e9f1ec" stroke-width="0.9"/><path d="M0.5 3.5H11.5M0.5 6.5H11.5M0.5 9.5H11.5M3.5 0.5V12M6.5 0.5V12M9 0.5V12" stroke="#e9f1ec" stroke-width="0.6" stroke-dasharray="1 1"/><path d="M3 3.5L5.5 2L8 3.5L7.5 6.5L5.5 8L3.5 6.5Z" fill="#e9f1ec"/></svg><svg style="left:27px;top:55px;" width="6" height="4" viewBox="0 0 6 4"><path d="M0.5 0.5 L5.5 0.5 L3 3.5 Z" fill="#e9f1ec"/></svg><svg style="left:39px;top:51px;" width="12" height="13" viewBox="0 0 12 13"><rect x="0.5" y="0.5" width="11" height="11.5" rx="1" fill="none" stroke="#e9f1ec"/><path d="M0.5 3.2H11.5M0.5 9.3H11.5M6 0.5V3.2M6 9.3V12" stroke="#e9f1ec" stroke-width="0.8"/><path d="M2.5 6.2H9.5M4 5L2.5 6.2L4 7.4M8 5L9.5 6.2L8 7.4" stroke="#e9f1ec" stroke-width="0.8" fill="none"/></svg><svg style="left:59.5px;top:51px;" width="12" height="13" viewBox="0 0 12 13"><rect x="0.5" y="0.5" width="11" height="11.5" rx="1" fill="none" stroke="#e9f1ec"/><path d="M3 2.5V10.5M3 2.5H9.5" stroke="#e9f1ec" stroke-width="1.3" fill="none"/><path d="M5 9.5L9 5.5M7 5.5H9V7.5" stroke="#e9f1ec" stroke-width="0.9" fill="none"/></svg><svg style="left:80px;top:51px;" width="12" height="13" viewBox="0 0 12 13"><path d="M0.5 0.5H6L9 3.5V6M0.5 0.5V12H5" fill="none" stroke="#e9f1ec"/><rect x="4" y="6.5" width="7" height="4" fill="none" stroke="#e9f1ec"/><circle cx="6" cy="11.5" r="1" fill="#e9f1ec"/><circle cx="10" cy="11.5" r="1" fill="#e9f1ec"/></svg><svg style="left:103px;top:55px;" width="7" height="5" viewBox="0 0 7 5"><path d="M0.5 0.5H6.5M1 2.5L3.5 4.5L6 2.5Z" stroke="#e9f1ec" stroke-width="0.8" fill="#e9f1ec"/></svg><div class="t" style="left:152.5px;width:200px;text-align:center;top:50.5px;line-height:13px;font-size:9px;color:#a9c7b2;">报表3.xlsx&nbsp; -&nbsp; Excel</div><div class="t" style="left:323px;width:200px;text-align:center;top:50.5px;line-height:13px;font-size:9px;color:#d5e5da;">登录</div><svg style="left:458px;top:52px;" width="10" height="9" viewBox="0 0 10 9"><path d="M0.5 8.5V0.5H8.5V3.5H3.5V8.5H8.5V6" fill="none" stroke="#a9c8b3" stroke-width="0.9"/></svg><div style="left:493px;top:56px;width:7px;height:1px;background:#a9c8b3"></div><svg style="left:525.5px;top:52px;" width="8" height="9" viewBox="0 0 8 9"><path d="M0.5 0.5H7.5V8.5H0.5" fill="none" stroke="#a9c8b3" stroke-width="0.9"/></svg><svg style="left:558.5px;top:52.5px;" width="8" height="8" viewBox="0 0 8 8"><path d="M0.5 0.5L7.5 7.5M7.5 0.5L0.5 7.5" stroke="#a9c8b3" stroke-width="0.9"/></svg><div style="left:-200px;top:70.5px;width:208.8px;height:21px;background:#f3f3f3"></div><div class="t" style="left:-72.0px;width:200px;text-align:center;top:74.3px;line-height:13px;font-size:9px;color:#f2f7f4;">插入</div><div class="t" style="left:-25.625px;width:200px;text-align:center;top:74.3px;line-height:13px;font-size:9px;color:#f2f7f4;">页面布局</div><div class="t" style="left:21.25px;width:200px;text-align:center;top:74.3px;line-height:13px;font-size:9px;color:#f2f7f4;">公式</div><div class="t" style="left:59.875px;width:200px;text-align:center;top:74.3px;line-height:13px;font-size:9px;color:#f2f7f4;">数据</div><div class="t" style="left:97.75px;width:200px;text-align:center;top:74.3px;line-height:13px;font-size:9px;color:#f2f7f4;">审阅</div><div class="t" style="left:135.375px;width:200px;text-align:center;top:74.3px;line-height:13px;font-size:9px;color:#f2f7f4;">视图</div><div class="t" style="left:182.25px;width:200px;text-align:center;top:74.3px;line-height:13px;font-size:9px;color:#f2f7f4;">开发工具</div><svg style="left:320.5px;top:74.5px;" width="8" height="12" viewBox="0 0 8 12"><path d="M2 8 Q0.5 6 0.5 4.5 A3.5 3.5 0 0 1 7.5 4.5 Q7.5 6 6 8 Z M2.5 9.5H5.5M3 11H5" fill="none" stroke="#e9f1ec" stroke-width="0.9"/></svg><div class="t" style="left:332.8px;top:74.64999999999999px;line-height:12.3px;font-size:8.3px;color:#dfeae2;">告诉我你想要做什么</div><div style="left:525px;top:70px;width:43px;height:21.8px;background:#000;border-radius:3px"></div><svg style="left:530px;top:75px;" width="13" height="13" viewBox="0 0 13 13"><circle cx="5.5" cy="4" r="3.2" fill="none" stroke="#fff" stroke-width="1"/><path d="M0.8 12 Q1.5 7.5 5.5 7.5 Q8 7.5 9 9" fill="none" stroke="#fff" stroke-width="1"/><path d="M9.5 9V13M7.5 11H11.5" stroke="#fff" stroke-width="1"/></svg><div class="t" style="left:544px;top:74.5px;line-height:13px;font-size:9px;color:#f4f4f4;-webkit-text-stroke:0.2px #fff">共享</div><div style="left:-200px;top:91.5px;width:779.5px;height:68px;background:#f3f3f3"></div><div style="left:-200px;top:159.5px;width:779.5px;height:1px;background:#d4d4d4"></div><div class="rb" style="left:0;top:0"><div style="left:-200px;top:100.2px;width:305px;height:16.4px;background:#fff;border:1px solid #c6c6c6;box-sizing:border-box"></div><div class="t" style="left:-4.5px;top:101.8px;line-height:13px;font-size:9px;color:#5a3f5e;">等线</div><svg style="left:97px;top:106.5px;" width="6" height="4" viewBox="0 0 6 4"><path d="M0.5 0.5 L5.5 0.5 L3 3.5 Z" fill="#6a4f6e"/></svg><div style="left:105.8px;top:100.2px;width:28.6px;height:16.4px;background:#fff;border:1px solid #c6c6c6;box-sizing:border-box"></div><div class="t" style="left:108px;top:101.75px;line-height:13.5px;font-size:9.5px;color:#5a3f5e;letter-spacing:-0.3px">11</div><svg style="left:126px;top:106.5px;" width="6" height="4" viewBox="0 0 6 4"><path d="M0.5 0.5 L5.5 0.5 L3 3.5 Z" fill="#6a4f6e"/></svg><div class="t" style="left:42.5px;width:200px;text-align:center;top:101.5px;line-height:14px;font-size:10px;color:#3b6b4c;">A</div><svg style="left:146px;top:102.5px;" width="4" height="2" viewBox="0 0 4 2"><path d="M0 2L2 0L4 2Z" fill="#2b7cd3"/></svg><div class="t" style="left:58.30000000000001px;width:200px;text-align:center;top:102.05px;line-height:13.5px;font-size:9.5px;color:#3b6b4c;">A</div><svg style="left:161px;top:102.5px;" width="4" height="2" viewBox="0 0 4 2"><path d="M0 0L2 2L4 0Z" fill="#2b7cd3"/></svg><div class="t" style="left:-100.5px;width:200px;text-align:center;top:123.0px;line-height:14px;font-size:10px;color:#3b6b4c;font-weight:bold">B</div><div class="t" style="left:-84.5px;width:200px;text-align:center;top:123.0px;line-height:14px;font-size:10px;color:#5a3f5e;font-style:italic;font-family:Liberation Serif,serif">I</div><div class="t" style="left:-67.5px;width:200px;text-align:center;top:122.5px;line-height:14px;font-size:10px;color:#3b6b4c;font-weight:bold"><u>U</u></div><svg style="left:41.5px;top:128px;" width="6" height="4" viewBox="0 0 6 4"><path d="M0.5 0.5 L5.5 0.5 L3 3.5 Z" fill="#4f7f60"/></svg><div style="left:52.5px;top:122px;width:1px;height:17px;background:#d5d5d5"></div><svg style="left:58px;top:124.5px;" width="11" height="12" viewBox="0 0 11 12"><rect x="0.5" y="0.5" width="10" height="10" fill="none" stroke="#6a9a7a" stroke-dasharray="1.2 0.8"/><path d="M5.5 0.5V10.5M0.5 5.5H10.5" stroke="#9ab8a5" stroke-dasharray="1 1"/><path d="M0 10.8H11" stroke="#3b7a52" stroke-width="1.2"/></svg><svg style="left:72px;top:128px;" width="6" height="4" viewBox="0 0 6 4"><path d="M0.5 0.5 L5.5 0.5 L3 3.5 Z" fill="#4f7f60"/></svg><div style="left:83.5px;top:122px;width:1px;height:17px;background:#d5d5d5"></div><svg style="left:89px;top:121.5px;" width="12" height="11" viewBox="0 0 12 11"><path d="M1.5 6L5.5 2.5L9.5 6.5L6 10L1.5 6Z" fill="#fff" stroke="#4a8a5a" stroke-width="0.9"/><path d="M4.5 4V0.8" stroke="#7a4a80" stroke-width="1"/><path d="M10 6Q11.8 8 10.5 9.5" stroke="#2b7cd3" fill="none" stroke-width="1.4"/></svg><div style="left:88.6px;top:133.2px;width:11.5px;height:2.6px;background:#d8c84a"></div><svg style="left:103px;top:128px;" width="6" height="4" viewBox="0 0 6 4"><path d="M0.5 0.5 L5.5 0.5 L3 3.5 Z" fill="#4f7f60"/></svg><div class="t" style="left:19px;width:200px;text-align:center;top:122.05000000000001px;line-height:13.5px;font-size:9.5px;color:#3b6b4c;">A</div><div style="left:113px;top:133.2px;width:11.6px;height:2.6px;background:#d9372a"></div><svg style="left:127.5px;top:128px;" width="6" height="4" viewBox="0 0 6 4"><path d="M0.5 0.5 L5.5 0.5 L3 3.5 Z" fill="#4f7f60"/></svg><div style="left:138.6px;top:122px;width:1px;height:17px;background:#d5d5d5"></div><div class="t" style="left:48px;width:200px;text-align:center;top:121.0px;line-height:10px;font-size:6px;color:#6b5a6b;">wén</div><div class="t" style="left:48px;width:200px;text-align:center;top:127.5px;line-height:11px;font-size:7px;color:#2b7cd3;">文</div><svg style="left:158.5px;top:128px;" width="6" height="4" viewBox="0 0 6 4"><path d="M0.5 0.5 L5.5 0.5 L3 3.5 Z" fill="#4f7f60"/></svg><div class="t" style="left:-26.5px;width:200px;text-align:center;top:145.8px;line-height:13px;font-size:9px;color:#244f34;">字体</div><svg style="left:160.5px;top:149.5px;" width="6" height="6" viewBox="0 0 6 6"><path d="M0.5 5.5V0.5H5.5" fill="none" stroke="#aaa" stroke-width="0.7"/><path d="M1.8 1.8L5 5M2.8 5.5H5.5V2.8" fill="none" stroke="#4a8a9a" stroke-width="0.8"/></svg><div style="left:169.4px;top:95px;width:1px;height:61px;background:#d5d5d5"></div><div style="left:188px;top:94px;width:16px;height:32.7px;background:#d5d0d2"></div><svg style="left:175px;top:95px;" width="12" height="8" viewBox="0 0 12 8"><rect x="0" y="0.6" width="11" height="1.1" fill="#6f8f7b"/><rect x="1.5" y="3" width="8.5" height="1.6" fill="#aab8ae"/><rect x="0" y="5.6" width="11" height="1.1" fill="#6f8f7b"/></svg><svg style="left:191px;top:98px;" width="12" height="8" viewBox="0 0 12 8"><rect x="0" y="0.6" width="11" height="1.3" fill="#7a4a80"/><path d="M0 2.5H11L10 6.8H1Z" fill="#8fb09b"/></svg><svg style="left:207px;top:102px;" width="12" height="7" viewBox="0 0 12 7"><rect x="0" y="0.3" width="11" height="1" fill="#6f8f7b"/><rect x="0" y="2.7" width="11" height="1.1" fill="#6f8f7b"/><rect x="0" y="5" width="11" height="1.1" fill="#6f8f7b"/></svg><svg style="left:224px;top:95px;" width="13" height="12" viewBox="0 0 13 12"><rect x="0.5" y="0.5" width="7.5" height="4" fill="none" stroke="#6f8f7b" stroke-width="0.9"/><rect x="0.5" y="6.5" width="7.5" height="4" fill="none" stroke="#6f8f7b" stroke-width="0.9"/><path d="M2 2.5H9.5M2 8.5H4.5M9.5 1.5Q12.3 2.5 12 6Q11.5 8.5 9 8.5M10.3 7.3L9 8.5L10.3 9.7" fill="none" stroke="#2b7cd3" stroke-width="0.9"/></svg><svg style="left:175px;top:114.5px;" width="12" height="9" viewBox="0 0 12 9"><rect x="0" y="0.5" width="11" height="1.1" fill="#6f8f7b"/><rect x="0" y="2.6" width="7" height="1.1" fill="#6f8f7b"/><rect x="0" y="4.7" width="11" height="1.1" fill="#6f8f7b"/><rect x="0" y="6.8" width="7" height="1.1" fill="#6f8f7b"/></svg><svg style="left:191px;top:114.5px;" width="12" height="9" viewBox="0 0 12 9"><rect x="0" y="0.5" width="11" height="1.2" fill="#7a4a80"/><rect x="2" y="2.6" width="7" height="1.2" fill="#7a4a80"/><path d="M0 4.5H11L9 8.5H2Z" fill="#8fb09b"/></svg><svg style="left:207px;top:114.5px;" width="12" height="9" viewBox="0 0 12 9"><rect x="0" y="0.5" width="11" height="1.1" fill="#6f8f7b"/><rect x="3" y="2.6" width="8" height="1.1" fill="#6f8f7b"/><rect x="0" y="4.7" width="11" height="1.1" fill="#6f8f7b"/><rect x="3" y="6.8" width="8" height="1.1" fill="#6f8f7b"/></svg><svg style="left:224px;top:112.5px;" width="12" height="12" viewBox="0 0 12 12"><rect x="0.5" y="0.5" width="11" height="10.5" fill="none" stroke="#6f8f7b" stroke-width="0.9"/><path d="M0.5 3H11.5M0.5 8.5H11.5M6 0.5V3M6 8.5V11" stroke="#6f8f7b" stroke-width="0.8"/><path d="M2 5.8H10M3.3 4.6L2 5.8L3.3 7M8.7 4.6L10 5.8L8.7 7" fill="none" stroke="#2b7cd3" stroke-width="0.9"/><rect x="5.5" y="0" width="1" height="1.5" fill="#7a4a80"/><rect x="5.5" y="10" width="1" height="1.5" fill="#7a4a80"/></svg><svg style="left:239.5px;top:116px;" width="6" height="4" viewBox="0 0 6 4"><path d="M0.5 0.5 L5.5 0.5 L3 3.5 Z" fill="#4f7f60"/></svg><svg style="left:174.5px;top:130px;" width="12" height="11" viewBox="0 0 12 11"><rect x="0" y="0" width="11.5" height="1.1" fill="#6f8f7b"/><rect x="0" y="9.3" width="11.5" height="1.1" fill="#6f8f7b"/><rect x="6" y="2.5" width="5.5" height="5.5" fill="#c9c9c9"/><rect x="6" y="2.5" width="5.5" height="1" fill="#6f8f7b"/><path d="M0.5 5H5.5M2.5 3L0.5 5L2.5 7" fill="none" stroke="#2b7cd3" stroke-width="1.2"/></svg><svg style="left:190.5px;top:130px;" width="12" height="11" viewBox="0 0 12 11"><rect x="0" y="0" width="11.5" height="1.1" fill="#6f8f7b"/><rect x="0" y="9.3" width="11.5" height="1.1" fill="#6f8f7b"/><rect x="6" y="2.5" width="5.5" height="5.5" fill="#c9c9c9"/><rect x="6" y="2.5" width="5.5" height="1" fill="#6f8f7b"/><path d="M0 5H5M3 3L5 5L3 7" fill="none" stroke="#2b7cd3" stroke-width="1.2"/></svg><div style="left:207px;top:127px;width:1px;height:15px;background:#d5d5d5"></div><svg style="left:212.5px;top:129px;" width="13" height="13" viewBox="0 0 13 13"><path d="M1.5 6.5L5 3M3 8L6.5 4.5M4.5 2.5L7.5 5.5M2 5L5 8" fill="none" stroke="#6a8a76" stroke-width="1"/><path d="M3 12L11 4M9.5 3.5H11.5V5.5" fill="none" stroke="#7a5a7e" stroke-width="1"/></svg><svg style="left:226.5px;top:134px;" width="6" height="4" viewBox="0 0 6 4"><path d="M0.5 0.5 L5.5 0.5 L3 3.5 Z" fill="#4f7f60"/></svg><div class="t" style="left:104.30000000000001px;width:200px;text-align:center;top:145.8px;line-height:13px;font-size:9px;color:#244f34;">对齐方式</div><svg style="left:242px;top:149.5px;" width="6" height="6" viewBox="0 0 6 6"><path d="M0.5 5.5V0.5H5.5" fill="none" stroke="#aaa" stroke-width="0.7"/><path d="M1.8 1.8L5 5M2.8 5.5H5.5V2.8" fill="none" stroke="#4a8a9a" stroke-width="0.8"/></svg><div style="left:250.6px;top:95px;width:1px;height:61px;background:#d5d5d5"></div><div style="left:254.4px;top:94.3px;width:55.1px;height:16.4px;background:#fff;border:1px solid #c6c6c6;box-sizing:border-box"></div><div class="t" style="left:256.5px;top:96.6px;line-height:12.4px;font-size:8.4px;color:#244f34;letter-spacing:0.5px">常规</div><svg style="left:301px;top:101px;" width="6" height="4" viewBox="0 0 6 4"><path d="M0.5 0.5 L5.5 0.5 L3 3.5 Z" fill="#4f7f60"/></svg><svg style="left:256px;top:113px;" width="12" height="12" viewBox="0 0 12 12"><rect x="0.5" y="0.5" width="11" height="5" fill="#dbe8f5" stroke="#2b7cd3" stroke-width="0.8"/><circle cx="6" cy="3" r="1.5" fill="#2b7cd3"/><rect x="2" y="7" width="8" height="2" fill="#e8d878"/><rect x="2" y="10" width="6" height="2" fill="#e8d878"/></svg><svg style="left:270px;top:117.5px;" width="6" height="4" viewBox="0 0 6 4"><path d="M0.5 0.5 L5.5 0.5 L3 3.5 Z" fill="#4f7f60"/></svg><div class="t" style="left:186.5px;width:200px;text-align:center;top:112.25px;line-height:14.5px;font-size:10.5px;color:#3b5a48;">%</div><svg style="left:300.5px;top:117.5px;" width="3" height="4" viewBox="0 0 3 4"><path d="M1.5 0.5A1 1 0 0 1 2.5 1.5Q2.5 3 1 3.8" fill="#5a3f5e" stroke="#5a3f5e" stroke-width="0.8"/></svg><svg style="left:255px;top:129px;" width="13" height="13" viewBox="0 0 13 13"><text x="4" y="5.8" font-size="6.5" fill="#3b6b4c" font-family="Liberation Sans" textLength="6" lengthAdjust="spacingAndGlyphs">.0</text><text x="1.5" y="12" font-size="6.5" fill="#3b6b4c" font-family="Liberation Sans" textLength="9" lengthAdjust="spacingAndGlyphs">.00</text><path d="M0.5 3.5H4.5M2 2L0.5 3.5L2 5" stroke="#2b7cd3" fill="none" stroke-width="1"/></svg><svg style="left:272px;top:129px;" width="13" height="13" viewBox="0 0 13 13"><text x="2" y="5.8" font-size="6.5" fill="#3b6b4c" font-family="Liberation Sans" textLength="9" lengthAdjust="spacingAndGlyphs">.00</text><text x="5" y="12" font-size="6.5" fill="#5a3f5e" font-family="Liberation Sans" textLength="6" lengthAdjust="spacingAndGlyphs">.0</text><path d="M0.5 10H5M3.5 8.5L5 10L3.5 11.5" stroke="#2b7cd3" fill="none" stroke-width="1"/></svg><div class="t" style="left:176.5px;width:200px;text-align:center;top:145.8px;line-height:13px;font-size:9px;color:#244f34;">数字</div><svg style="left:304px;top:149.5px;" width="6" height="6" viewBox="0 0 6 6"><path d="M0.5 5.5V0.5H5.5" fill="none" stroke="#aaa" stroke-width="0.7"/><path d="M1.8 1.8L5 5M2.8 5.5H5.5V2.8" fill="none" stroke="#4a8a9a" stroke-width="0.8"/></svg><div style="left:313.4px;top:95px;width:1px;height:61px;background:#d5d5d5"></div><svg style="left:318.5px;top:96px;" width="12" height="12" viewBox="0 0 12 12"><rect x="0.5" y="0.5" width="10" height="10" fill="#fff" stroke="#9a9a9a" stroke-width="0.7"/><rect x="0" y="0" width="5" height="2.5" fill="#d9372a"/><rect x="0" y="3.5" width="5" height="2.5" fill="#3a9a8a"/><rect x="0" y="7" width="5" height="2.5" fill="#d9372a"/><path d="M5.5 3.5H10.5M5.5 7H8" stroke="#9a9a9a" stroke-width="0.7"/><rect x="6" y="6" width="5.5" height="5.5" fill="#fff" stroke="#444" stroke-width="0.8"/><path d="M7.5 8H10M7.5 9.8H10" stroke="#444" stroke-width="0.7"/></svg><div class="t" style="left:332.7px;top:96.6px;line-height:12.4px;font-size:8.4px;color:#244f34;letter-spacing:0.5px">条件格式</div><svg style="left:368.5px;top:101.5px;" width="6" height="4" viewBox="0 0 6 4"><path d="M0.5 0.5 L5.5 0.5 L3 3.5 Z" fill="#4f7f60"/></svg><svg style="left:318.5px;top:113px;" width="12" height="12" viewBox="0 0 12 12"><rect x="0.5" y="0.5" width="11" height="9" fill="#fff" stroke="#6f8f7b" stroke-width="0.8"/><path d="M0.5 3.5H11.5M4 0.5V9.5M8 0.5V9.5M0.5 6.5H11.5" stroke="#9fb8a8" stroke-width="0.6"/><path d="M3 11L9 5L11 6L5 12Z" fill="#2b7cd3"/></svg><div class="t" style="left:332.7px;top:113.1px;line-height:12.4px;font-size:8.4px;color:#244f34;letter-spacing:0.5px">套用表格格式</div><svg style="left:385.5px;top:117.5px;" width="6" height="4" viewBox="0 0 6 4"><path d="M0.5 0.5 L5.5 0.5 L3 3.5 Z" fill="#4f7f60"/></svg><svg style="left:318.5px;top:129px;" width="12" height="12" viewBox="0 0 12 12"><rect x="0.5" y="0.5" width="11" height="9" fill="#dbe8f5" stroke="#6f8f7b" stroke-width="0.8"/><path d="M3 11L9 5L11 6L5 12Z" fill="#2b7cd3"/></svg><div class="t" style="left:332.7px;top:129.10000000000002px;line-height:12.4px;font-size:8.4px;color:#244f34;letter-spacing:0.5px">单元格样式</div><svg style="left:377.5px;top:133.5px;" width="6" height="4" viewBox="0 0 6 4"><path d="M0.5 0.5 L5.5 0.5 L3 3.5 Z" fill="#4f7f60"/></svg><div class="t" style="left:255.5px;width:200px;text-align:center;top:145.8px;line-height:13px;font-size:9px;color:#244f34;">样式</div><div style="left:397.6px;top:95px;width:1px;height:61px;background:#d5d5d5"></div><svg style="left:404px;top:96px;" width="13" height="12" viewBox="0 0 13 12"><path d="M0.5 0.5H8.5V11.5H0.5ZM0.5 4H8.5M0.5 8H8.5M4.5 0.5V11.5" fill="none" stroke="#6f8f7b" stroke-width="0.8"/><rect x="4.5" y="4" width="8" height="4" fill="#fff" stroke="#6f8f7b" stroke-width="0.8"/><path d="M1.5 6H10M3 4.8L1.5 6L3 7.2" stroke="#2b7cd3" fill="none" stroke-width="0.9"/></svg><div class="t" style="left:417.8px;top:96.6px;line-height:12.4px;font-size:8.4px;color:#244f34;letter-spacing:0.5px">插入</div><svg style="left:441.5px;top:101.5px;" width="6" height="4" viewBox="0 0 6 4"><path d="M0.5 0.5 L5.5 0.5 L3 3.5 Z" fill="#4f7f60"/></svg><svg style="left:404px;top:113px;" width="13" height="12" viewBox="0 0 13 12"><path d="M0.5 0.5H8.5V11.5H0.5ZM0.5 4H8.5M0.5 8H8.5M4.5 0.5V11.5" fill="none" stroke="#6f8f7b" stroke-width="0.8"/><rect x="4.5" y="4" width="4" height="4" fill="#fff"/><path d="M7 2L11.5 6.5M11.5 2L7 6.5" stroke="#e0a020" stroke-width="1"/></svg><div class="t" style="left:417.8px;top:113.1px;line-height:12.4px;font-size:8.4px;color:#244f34;letter-spacing:0.5px">删除</div><svg style="left:441.5px;top:117.5px;" width="6" height="4" viewBox="0 0 6 4"><path d="M0.5 0.5 L5.5 0.5 L3 3.5 Z" fill="#4f7f60"/></svg><svg style="left:404px;top:129px;" width="12" height="12" viewBox="0 0 12 12"><rect x="0.5" y="0.5" width="11" height="11" fill="#fff" stroke="#6f8f7b" stroke-width="0.8"/><path d="M0.5 1H11.5" stroke="#2b7cd3" stroke-width="1.2"/><path d="M4 1V11.5M8 1V11.5M0.5 4H11.5M0.5 8H11.5" stroke="#9fb8a8" stroke-width="0.6" stroke-dasharray="1 1"/><rect x="4" y="4" width="4" height="4" fill="#2b7cd3" opacity="0.7"/></svg><div class="t" style="left:417.8px;top:129.10000000000002px;line-height:12.4px;font-size:8.4px;color:#244f34;letter-spacing:0.5px">格式</div><svg style="left:437.5px;top:133.5px;" width="6" height="4" viewBox="0 0 6 4"><path d="M0.5 0.5 L5.5 0.5 L3 3.5 Z" fill="#4f7f60"/></svg><div class="t" style="left:325.8px;width:200px;text-align:center;top:145.8px;line-height:13px;font-size:9px;color:#244f34;">单元格</div><div style="left:452.5px;top:95px;width:1px;height:61px;background:#d5d5d5"></div><svg style="left:457.5px;top:96px;" width="12" height="12" viewBox="0 0 12 12"><path d="M11 1.2H1.2L6.2 6L1.2 10.8H11" fill="none" stroke="#2e6b47" stroke-width="1.6"/></svg><svg style="left:472px;top:101.5px;" width="6" height="4" viewBox="0 0 6 4"><path d="M0.5 0.5 L5.5 0.5 L3 3.5 Z" fill="#4f7f60"/></svg><svg style="left:458.5px;top:112.5px;" width="12" height="12" viewBox="0 0 12 12"><rect x="0.5" y="0.5" width="10" height="11" fill="#fff" stroke="#6f8f7b" stroke-width="0.9"/><path d="M0.5 1.5H10.5" stroke="#7a5a7e" stroke-width="1.4"/><path d="M5.5 4V9.5M3 7L5.5 9.5L8 7" stroke="#2b7cd3" fill="none" stroke-width="1.2"/></svg><svg style="left:471.5px;top:117.5px;" width="6" height="4" viewBox="0 0 6 4"><path d="M0.5 0.5 L5.5 0.5 L3 3.5 Z" fill="#4f7f60"/></svg><svg style="left:459px;top:130px;" width="11" height="10" viewBox="0 0 11 10"><path d="M1 7L6 2L9 5L4 10Z" fill="#d8b8a8"/><path d="M1 7L4 10" stroke="#c49080"/></svg><svg style="left:471.5px;top:134px;" width="6" height="4" viewBox="0 0 6 4"><path d="M0.5 0.5 L5.5 0.5 L3 3.5 Z" fill="#4f7f60"/></svg><div class="t" style="left:387px;width:200px;text-align:center;top:92.5px;line-height:10px;font-size:6px;color:#2b7cd3;">A</div><div class="t" style="left:387px;width:200px;text-align:center;top:99.5px;line-height:10px;font-size:6px;color:#2b7cd3;">Z</div><svg style="left:489px;top:99px;" width="6" height="6" viewBox="0 0 6 6"><path d="M0 0H6L3.5 3V6H2.5V3Z" fill="#3b6b4c"/></svg><svg style="left:496.5px;top:100px;" width="6" height="4" viewBox="0 0 6 4"><path d="M0.5 0.5 L5.5 0.5 L3 3.5 Z" fill="#4f7f60"/></svg><svg style="left:484px;top:113.5px;" width="11" height="11" viewBox="0 0 11 11"><circle cx="6.5" cy="4.5" r="3.3" fill="none" stroke="#2b7cd3" stroke-width="1.3"/><path d="M4 7L1 10" stroke="#2b7cd3" stroke-width="1.8"/></svg><svg style="left:496.5px;top:117px;" width="6" height="4" viewBox="0 0 6 4"><path d="M0.5 0.5 L5.5 0.5 L3 3.5 Z" fill="#4f7f60"/></svg><div class="t" style="left:380.5px;width:200px;text-align:center;top:145.8px;line-height:13px;font-size:9px;color:#244f34;">编辑</div><div style="left:508px;top:95px;width:1px;height:61px;background:#d5d5d5"></div><svg style="left:516px;top:99.5px;" width="20" height="16" viewBox="0 0 20 16"><path d="M1 4H6L8 1H12L14 4H19V15.5H1Z" fill="#7d6b7e"/><circle cx="10" cy="9.5" r="3.7" fill="#eee"/><circle cx="10" cy="9.5" r="2.2" fill="#7d6b7e"/><rect x="2.5" y="5" width="2" height="1.3" fill="#eee"/></svg><div class="t" style="left:426.5px;width:200px;text-align:center;top:119.8px;line-height:12.4px;font-size:8.4px;color:#244f34;letter-spacing:0.5px">照相机</div><div class="t" style="left:426.5px;width:200px;text-align:center;top:146.05px;line-height:12.5px;font-size:8.5px;color:#244f34;font-weight:bold">xiangji</div><div style="left:544px;top:95px;width:1px;height:61px;background:#d0d0d0"></div><svg style="left:565px;top:150px;" width="8" height="5" viewBox="0 0 8 5"><path d="M0.5 4.5L4 1L7.5 4.5" fill="none" stroke="#555" stroke-width="1"/></svg></div><div style="left:-200px;top:160.5px;width:779.5px;height:47px;background:#e6e6e6"></div><div style="left:-200px;top:167px;width:204.5px;height:20.6px;background:#f9f9f9;border:1px solid #d0d0d0;box-sizing:border-box"></div><svg style="left:14px;top:173px;" width="3" height="10" viewBox="0 0 3 10"><circle cx="1.5" cy="1.5" r="0.8" fill="#999"/><circle cx="1.5" cy="5" r="0.8" fill="#999"/><circle cx="1.5" cy="8.5" r="0.8" fill="#999"/></svg><div style="left:27px;top:167px;width:78.5px;height:20.6px;background:#f7f7f7;border:1px solid #d4d4d4;box-sizing:border-box"></div><svg style="left:36px;top:173px;" width="8" height="8" viewBox="0 0 8 8"><path d="M0.5 0.5L7.5 7.5M7.5 0.5L0.5 7.5" stroke="#b5b5b5"/></svg><svg style="left:61px;top:173px;" width="10" height="8" viewBox="0 0 10 8"><path d="M0.5 4L3.5 7.5L9.5 0.5" fill="none" stroke="#b5b5b5" stroke-width="1.1"/></svg><div class="t" style="left:88px;top:169.0px;line-height:15px;font-size:11px;color:#3e5e4a;font-family:Liberation Serif,serif"><i>f</i><span style="font-size:8px;position:relative;top:1px"><i>x</i></span></div><div style="left:108.5px;top:167px;width:467px;height:20.6px;background:#f9f9f9;border:1px solid #d0d0d0;box-sizing:border-box"></div><svg style="left:565px;top:175px;" width="8" height="5" viewBox="0 0 8 5"><path d="M0.5 0.5L4 4L7.5 0.5" fill="none" stroke="#555" stroke-width="1"/></svg><div class="t" style="left:-126.0px;width:200px;text-align:center;top:193.55px;line-height:15.5px;font-size:11.5px;color:#2c5e3f;transform:scaleX(0.78)">A</div><div style="left:-0.6px;top:195px;width:1px;height:12px;background:#d2d2d2"></div><div class="t" style="left:-74.0px;width:200px;text-align:center;top:193.55px;line-height:15.5px;font-size:11.5px;color:#2c5e3f;transform:scaleX(0.78)">B</div><div style="left:51.4px;top:195px;width:1px;height:12px;background:#d2d2d2"></div><div class="t" style="left:-22.099999999999994px;width:200px;text-align:center;top:193.55px;line-height:15.5px;font-size:11.5px;color:#2c5e3f;transform:scaleX(0.78)">C</div><div style="left:103.2px;top:195px;width:1px;height:12px;background:#d2d2d2"></div><div class="t" style="left:29.650000000000006px;width:200px;text-align:center;top:193.55px;line-height:15.5px;font-size:11.5px;color:#2c5e3f;transform:scaleX(0.78)">D</div><div style="left:154.9px;top:195px;width:1px;height:12px;background:#d2d2d2"></div><div class="t" style="left:81.5px;width:200px;text-align:center;top:193.55px;line-height:15.5px;font-size:11.5px;color:#2c5e3f;transform:scaleX(0.78)">E</div><div style="left:206.9px;top:195px;width:1px;height:12px;background:#d2d2d2"></div><div class="t" style="left:133.4px;width:200px;text-align:center;top:193.55px;line-height:15.5px;font-size:11.5px;color:#2c5e3f;transform:scaleX(0.78)">F</div><div style="left:258.7px;top:195px;width:1px;height:12px;background:#d2d2d2"></div><div class="t" style="left:185.25px;width:200px;text-align:center;top:193.55px;line-height:15.5px;font-size:11.5px;color:#2c5e3f;transform:scaleX(0.78)">G</div><div style="left:310.59999999999997px;top:195px;width:1px;height:12px;background:#d2d2d2"></div><div class="t" style="left:237.0px;width:200px;text-align:center;top:193.55px;line-height:15.5px;font-size:11.5px;color:#2c5e3f;transform:scaleX(0.78)">H</div><div style="left:362.2px;top:195px;width:1px;height:12px;background:#d2d2d2"></div><div class="t" style="left:288.65px;width:200px;text-align:center;top:193.55px;line-height:15.5px;font-size:11.5px;color:#2c5e3f;transform:scaleX(0.78)">I</div><div style="left:413.9px;top:195px;width:1px;height:12px;background:#d2d2d2"></div><div class="t" style="left:340.55px;width:200px;text-align:center;top:193.55px;line-height:15.5px;font-size:11.5px;color:#2c5e3f;transform:scaleX(0.78)">J</div><div style="left:466.0px;top:195px;width:1px;height:12px;background:#d2d2d2"></div><div class="t" style="left:392.45px;width:200px;text-align:center;top:193.55px;line-height:15.5px;font-size:11.5px;color:#2c5e3f;transform:scaleX(0.78)">K</div><div style="left:517.6999999999999px;top:195px;width:1px;height:12px;background:#d2d2d2"></div><div class="t" style="left:444.15px;width:200px;text-align:center;top:193.55px;line-height:15.5px;font-size:11.5px;color:#2c5e3f;transform:scaleX(0.78)">L</div><div style="left:569.4px;top:195px;width:1px;height:12px;background:#d2d2d2"></div><div style="left:-200px;top:207.4px;width:763.5px;height:230px;background:#fcfcfc"></div><div style="left:-200px;top:227.4px;width:763.5px;height:1px;background:#e0e0e0"></div><div style="left:-200px;top:257px;width:763.5px;height:1px;background:#e0e0e0"></div><div style="left:-200px;top:286.5px;width:763.5px;height:1px;background:#e0e0e0"></div><div style="left:-200px;top:316px;width:763.5px;height:1px;background:#e0e0e0"></div><div style="left:-200px;top:345.5px;width:763.5px;height:1px;background:#e0e0e0"></div><div style="left:-200px;top:375px;width:763.5px;height:1px;background:#e0e0e0"></div><div style="left:-200px;top:404.6px;width:763.5px;height:1px;background:#e0e0e0"></div><div style="left:-200px;top:434px;width:763.5px;height:1px;background:#e0e0e0"></div><div style="left:-0.6px;top:207.4px;width:1px;height:230px;background:#e2e2e2"></div><div style="left:51.4px;top:207.4px;width:1px;height:230px;background:#e2e2e2"></div><div style="left:103.2px;top:207.4px;width:1px;height:230px;background:#e2e2e2"></div><div style="left:154.9px;top:207.4px;width:1px;height:230px;background:#e2e2e2"></div><div style="left:206.9px;top:207.4px;width:1px;height:230px;background:#e2e2e2"></div><div style="left:258.7px;top:207.4px;width:1px;height:230px;background:#e2e2e2"></div><div style="left:310.59999999999997px;top:207.4px;width:1px;height:230px;background:#e2e2e2"></div><div style="left:362.2px;top:207.4px;width:1px;height:230px;background:#e2e2e2"></div><div style="left:413.9px;top:207.4px;width:1px;height:230px;background:#e2e2e2"></div><div style="left:466.0px;top:207.4px;width:1px;height:230px;background:#e2e2e2"></div><div style="left:517.6999999999999px;top:207.4px;width:1px;height:230px;background:#e2e2e2"></div><div style="left:-200px;top:207px;width:764px;height:1px;background:#7fb08f"></div><div style="left:563.2px;top:207px;width:1px;height:230.5px;background:#8cb89a"></div><div style="left:48.7px;top:437px;width:515.3px;height:1px;background:#8cb89a"></div><div class="t" style="left:2.5px;top:210.75px;line-height:14.5px;font-size:10.5px;color:#111;-webkit-text-stroke:0.45px #111">1月份报表</div><div style="left:-200px;top:227.4px;width:303.8px;height:29.6px;background:#217346"></div><div class="t" style="left:-73.5px;width:200px;text-align:center;top:235.6px;line-height:14.8px;font-size:10.8px;color:#fff;-webkit-text-stroke:0.35px #fff">销售人员</div><div class="t" style="left:-22px;width:200px;text-align:center;top:235.6px;line-height:14.8px;font-size:10.8px;color:#fff;-webkit-text-stroke:0.35px #fff">销售业绩</div><div style="left:-200px;top:257px;width:303.8px;height:29.5px;background:#fcfcfc"></div><div class="t" style="left:-74px;width:200px;text-align:center;top:265.75px;line-height:15px;font-size:11px;color:#2a5a3e;">张磊</div><div class="t" style="left:-22px;width:200px;text-align:center;top:265.75px;line-height:15px;font-size:11px;color:#2a5a3e;">3600</div><div style="left:-200px;top:286.5px;width:303.8px;height:29.5px;background:#fcfcfc"></div><div class="t" style="left:-74px;width:200px;text-align:center;top:295.25px;line-height:15px;font-size:11px;color:#2a5a3e;">王艳萍</div><div class="t" style="left:-22px;width:200px;text-align:center;top:295.25px;line-height:15px;font-size:11px;color:#2a5a3e;">5000</div><div style="left:-200px;top:316px;width:303.8px;height:29.5px;background:#fcfcfc"></div><div class="t" style="left:-74px;width:200px;text-align:center;top:324.75px;line-height:15px;font-size:11px;color:#2a5a3e;">杨澜</div><div class="t" style="left:-22px;width:200px;text-align:center;top:324.75px;line-height:15px;font-size:11px;color:#2a5a3e;">3980</div><div style="left:-200px;top:345.5px;width:303.8px;height:29.5px;background:#fcfcfc"></div><div class="t" style="left:-74px;width:200px;text-align:center;top:354.25px;line-height:15px;font-size:11px;color:#2a5a3e;">周光</div><div class="t" style="left:-22px;width:200px;text-align:center;top:354.25px;line-height:15px;font-size:11px;color:#2a5a3e;">5000</div><div style="left:-200px;top:375px;width:303.8px;height:29.600000000000023px;background:#fcfcfc"></div><div class="t" style="left:-74px;width:200px;text-align:center;top:383.8px;line-height:15px;font-size:11px;color:#2a5a3e;">陈东琪</div><div class="t" style="left:-22px;width:200px;text-align:center;top:383.8px;line-height:15px;font-size:11px;color:#2a5a3e;">6500</div><div style="left:-200px;top:404.6px;width:303.8px;height:29.399999999999977px;background:#fcfcfc"></div><div class="t" style="left:-74px;width:200px;text-align:center;top:413.3px;line-height:15px;font-size:11px;color:#2a5a3e;">马小玲</div><div class="t" style="left:-22px;width:200px;text-align:center;top:413.3px;line-height:15px;font-size:11px;color:#2a5a3e;">7000</div><div style="left:-200px;top:256.5px;width:304.3px;height:1px;background:#2d4f3a"></div><div style="left:-200px;top:286.0px;width:304.3px;height:1px;background:#2d4f3a"></div><div style="left:-200px;top:315.5px;width:304.3px;height:1px;background:#2d4f3a"></div><div style="left:-200px;top:345.0px;width:304.3px;height:1px;background:#2d4f3a"></div><div style="left:-200px;top:374.5px;width:304.3px;height:1px;background:#2d4f3a"></div><div style="left:-200px;top:404.1px;width:304.3px;height:1px;background:#2d4f3a"></div><div style="left:-200px;top:433.5px;width:304.3px;height:1px;background:#2d4f3a"></div><div style="left:103.4px;top:207.4px;width:1.2px;height:227px;background:#6a5870"></div><div style="left:51.8px;top:227.4px;width:1px;height:207px;background:#2d4f3a"></div><div style="left:-0.3px;top:227.4px;width:1.4px;height:207px;background:#2a4a36"></div><div style="left:-200px;top:433.5px;width:304.5px;height:1.4px;background:#4a3a4a"></div><div style="left:564.2px;top:194px;width:15.3px;height:243px;background:#e3e3e3"></div><div style="left:566.5px;top:196px;width:10px;height:10.5px;background:#fff;border:1px solid #cfcfcf;box-sizing:border-box"></div><svg style="left:568.5px;top:199px;" width="6" height="4" viewBox="0 0 6 4"><path d="M0 3.5L3 0.5L6 3.5Z" fill="#217346"/></svg><div style="left:566.5px;top:206.5px;width:10px;height:0.0px;background:#d8d8d8"></div><div style="left:566.5px;top:206.5px;width:10px;height:152.5px;background:#fff;border:1px solid #d0d0d0;box-sizing:border-box"></div><div style="left:566.5px;top:359px;width:10px;height:69px;background:#d8d8d8"></div><div style="left:566.5px;top:427.5px;width:10px;height:10px;background:#fff;border:1px solid #cfcfcf;box-sizing:border-box"></div><div style="left:565.8px;top:196px;width:11.4px;height:241.5px;border:1px solid #a9c7b2;box-sizing:border-box"></div><svg style="left:568.5px;top:431px;" width="6" height="4" viewBox="0 0 6 4"><path d="M0 0.5L3 3.5L6 0.5Z" fill="#4a7a5c"/></svg><div style="left:-200px;top:438px;width:779.5px;height:19.5px;background:#e6e6e6"></div><div style="left:-200px;top:435px;width:249px;height:20px;background:#fcfcfc"></div><div style="left:48.7px;top:437px;width:1.2px;height:18px;background:#7faa8e"></div><div style="left:-200px;top:453.5px;width:249.9px;height:1.5px;background:#217346"></div><div class="t" style="left:-76px;width:200px;text-align:center;top:438.75px;line-height:14.5px;font-size:10.5px;color:#2c5e3f;transform:scaleX(0.92)">Sheet1</div><svg style="left:73px;top:441px;" width="12" height="12" viewBox="0 0 12 12"><circle cx="6" cy="6" r="5" fill="none" stroke="#6b8f78" stroke-width="1"/><path d="M6 3V9M3 6H9" stroke="#6b8f78" stroke-width="1"/></svg><svg style="left:318px;top:443px;" width="3" height="10" viewBox="0 0 3 10"><circle cx="1.5" cy="1.5" r="0.7" fill="#888"/><circle cx="1.5" cy="5" r="0.7" fill="#888"/><circle cx="1.5" cy="8.5" r="0.7" fill="#888"/></svg><div style="left:331px;top:442.5px;width:10.5px;height:10.5px;background:#fff;border:1px solid #a9c7b2;box-sizing:border-box"></div><svg style="left:334px;top:445px;" width="4" height="6" viewBox="0 0 4 6"><path d="M3.5 0L0.5 3L3.5 6Z" fill="#217346"/></svg><div style="left:341.5px;top:442.5px;width:192px;height:10.5px;background:#fff;border:1px solid #a9c7b2;box-sizing:border-box"></div><div style="left:533.5px;top:442.5px;width:20px;height:10.5px;background:#d8d8d8"></div><div style="left:554px;top:442.5px;width:11px;height:10.5px;background:#fff;border:1px solid #a9c7b2;box-sizing:border-box"></div><svg style="left:557.5px;top:445px;" width="4" height="6" viewBox="0 0 4 6"><path d="M0.5 0L3.5 3L0.5 6Z" fill="#4a7a5c"/></svg><div style="left:-200px;top:456.8px;width:779.5px;height:17px;background:#ededed"></div><div style="left:-200px;top:473px;width:779.5px;height:1.2px;background:#8cb89a"></div><div style="left:362.2px;top:457px;width:26.6px;height:16px;background:#d4d0d4"></div><svg style="left:369px;top:460px;" width="12" height="11" viewBox="0 0 12 11"><rect x="0.5" y="0.5" width="11" height="10" fill="none" stroke="#7a5a7e"/><path d="M0.5 3.8H11.5M0.5 7.2H11.5M4.2 0.5V10.5M7.8 0.5V10.5" stroke="#7a5a7e" stroke-width="0.9"/></svg><svg style="left:397px;top:460px;" width="12" height="11" viewBox="0 0 12 11"><rect x="0.5" y="0.5" width="11" height="10" fill="none" stroke="#6b8f78"/><rect x="2.5" y="2.5" width="7" height="6" fill="#c5d5ca" stroke="#6b8f78" stroke-width="0.8"/></svg><svg style="left:424px;top:460px;" width="12" height="11" viewBox="0 0 12 11"><path d="M0.5 0.5H11.5V10.5H0.5ZM5.5 0.5V5.5H0.5" fill="none" stroke="#6b8f78"/></svg><div style="left:446px;top:465px;width:6px;height:1.2px;background:#555"></div><div style="left:455px;top:465px;width:70px;height:1px;background:#b5b5b5"></div><div style="left:489.5px;top:461px;width:3px;height:9px;background:#3b7a52"></div><div class="t" style="left:432px;width:200px;text-align:center;top:458.5px;line-height:14px;font-size:10px;color:#555;font-weight:bold">+</div><div class="t" style="left:453.5px;width:200px;text-align:center;top:458.75px;line-height:13.5px;font-size:9.5px;color:#666;">100%</div><div style="left:578.5px;top:91.5px;width:1.2px;height:68.5px;background:#c9c9c9"></div><div style="left:578.5px;top:160px;width:1.2px;height:314px;background:#8cb89a"></div></div></div><div class="clip" style="left:-46.5px;top:26.7px;width:649.8px;height:430.2px"><div style="left:70.3px;top:-44px;width:640px;height:474px"><div style="left:-200px;top:44px;width:779.5px;height:47.5px;background:#217346"></div><svg style="left:-36px;top:50px;" width="12" height="12" viewBox="0 0 12 12"><path d="M3 3 L1 5.5 L3 8 M1.2 5.5 H7.5 Q10.5 5.5 10.5 8 Q10.5 10.5 7.5 10.5 H5" fill="none" stroke="#8fb89e" stroke-width="1"/></svg><svg style="left:-11px;top:50px;" width="12" height="12" viewBox="0 0 12 12"><path d="M9 3 L11 5.5 L9 8 M10.8 5.5 H4.5 Q1.5 5.5 1.5 8 Q1.5 10.5 4.5 10.5 H7" fill="none" stroke="#8fb89e" stroke-width="1"/></svg><svg style="left:-21px;top:56px;" width="4" height="2" viewBox="0 0 4 2"><rect width="3" height="1" fill="#8fb89e"/></svg><svg style="left:-55.5px;top:51px;" width="11" height="11" viewBox="0 0 11 11"><path d="M0.5 0.5H8.5L10.5 2.5V10.5H0.5Z" fill="none" stroke="#e9f1ec"/><rect x="3" y="0.5" width="5" height="3" fill="#e9f1ec"/><rect x="2.5" y="6.5" width="6" height="4" fill="#e9f1ec"/></svg><svg style="left:4px;top:56px;" width="4" height="2" viewBox="0 0 4 2"><rect width="3" height="1" fill="#8fb89e"/></svg><svg style="left:11px;top:51px;" width="13" height="13" viewBox="0 0 13 13"><rect x="0.5" y="0.5" width="11" height="11.5" fill="none" stroke="#e9f1ec" stroke-width="0.9"/><path d="M0.5 3.5H11.5M0.5 6.5H11.5M0.5 9.5H11.5M3.5 0.5V12M6.5 0.5V12M9 0.5V12" stroke="#e9f1ec" stroke-width="0.6" stroke-dasharray="1 1"/><path d="M3 3.5L5.5 2L8 3.5L7.5 6.5L5.5 8L3.5 6.5Z" fill="#e9f1ec"/></svg><svg style="left:27px;top:55px;" width="6" height="4" viewBox="0 0 6 4"><path d="M0.5 0.5 L5.5 0.5 L3 3.5 Z" fill="#e9f1ec"/></svg><svg style="left:39px;top:51px;" width="12" height="13" viewBox="0 0 12 13"><rect x="0.5" y="0.5" width="11" height="11.5" rx="1" fill="none" stroke="#e9f1ec"/><path d="M0.5 3.2H11.5M0.5 9.3H11.5M6 0.5V3.2M6 9.3V12" stroke="#e9f1ec" stroke-width="0.8"/><path d="M2.5 6.2H9.5M4 5L2.5 6.2L4 7.4M8 5L9.5 6.2L8 7.4" stroke="#e9f1ec" stroke-width="0.8" fill="none"/></svg><svg style="left:59.5px;top:51px;" width="12" height="13" viewBox="0 0 12 13"><rect x="0.5" y="0.5" width="11" height="11.5" rx="1" fill="none" stroke="#e9f1ec"/><path d="M3 2.5V10.5M3 2.5H9.5" stroke="#e9f1ec" stroke-width="1.3" fill="none"/><path d="M5 9.5L9 5.5M7 5.5H9V7.5" stroke="#e9f1ec" stroke-width="0.9" fill="none"/></svg><svg style="left:80px;top:51px;" width="12" height="13" viewBox="0 0 12 13"><path d="M0.5 0.5H6L9 3.5V6M0.5 0.5V12H5" fill="none" stroke="#e9f1ec"/><rect x="4" y="6.5" width="7" height="4" fill="none" stroke="#e9f1ec"/><circle cx="6" cy="11.5" r="1" fill="#e9f1ec"/><circle cx="10" cy="11.5" r="1" fill="#e9f1ec"/></svg><svg style="left:103px;top:55px;" width="7" height="5" viewBox="0 0 7 5"><path d="M0.5 0.5H6.5M1 2.5L3.5 4.5L6 2.5Z" stroke="#e9f1ec" stroke-width="0.8" fill="#e9f1ec"/></svg><div class="t" style="left:152.5px;width:200px;text-align:center;top:50.5px;line-height:13px;font-size:9px;color:#a9c7b2;">报表2.xlsx&nbsp; -&nbsp; Excel</div><div class="t" style="left:323px;width:200px;text-align:center;top:50.5px;line-height:13px;font-size:9px;color:#d5e5da;">登录</div><svg style="left:458px;top:52px;" width="10" height="9" viewBox="0 0 10 9"><path d="M0.5 8.5V0.5H8.5V3.5H3.5V8.5H8.5V6" fill="none" stroke="#a9c8b3" stroke-width="0.9"/></svg><div style="left:493px;top:56px;width:7px;height:1px;background:#a9c8b3"></div><svg style="left:525.5px;top:52px;" width="8" height="9" viewBox="0 0 8 9"><path d="M0.5 0.5H7.5V8.5H0.5" fill="none" stroke="#a9c8b3" stroke-width="0.9"/></svg><svg style="left:558.5px;top:52.5px;" width="8" height="8" viewBox="0 0 8 8"><path d="M0.5 0.5L7.5 7.5M7.5 0.5L0.5 7.5" stroke="#a9c8b3" stroke-width="0.9"/></svg><div style="left:-200px;top:70.5px;width:208.8px;height:21px;background:#f3f3f3"></div><div class="t" style="left:-72.0px;width:200px;text-align:center;top:74.3px;line-height:13px;font-size:9px;color:#f2f7f4;">插入</div><div class="t" style="left:-25.625px;width:200px;text-align:center;top:74.3px;line-height:13px;font-size:9px;color:#f2f7f4;">页面布局</div><div class="t" style="left:21.25px;width:200px;text-align:center;top:74.3px;line-height:13px;font-size:9px;color:#f2f7f4;">公式</div><div class="t" style="left:59.875px;width:200px;text-align:center;top:74.3px;line-height:13px;font-size:9px;color:#f2f7f4;">数据</div><div class="t" style="left:97.75px;width:200px;text-align:center;top:74.3px;line-height:13px;font-size:9px;color:#f2f7f4;">审阅</div><div class="t" style="left:135.375px;width:200px;text-align:center;top:74.3px;line-height:13px;font-size:9px;color:#f2f7f4;">视图</div><div class="t" style="left:182.25px;width:200px;text-align:center;top:74.3px;line-height:13px;font-size:9px;color:#f2f7f4;">开发工具</div><svg style="left:320.5px;top:74.5px;" width="8" height="12" viewBox="0 0 8 12"><path d="M2 8 Q0.5 6 0.5 4.5 A3.5 3.5 0 0 1 7.5 4.5 Q7.5 6 6 8 Z M2.5 9.5H5.5M3 11H5" fill="none" stroke="#e9f1ec" stroke-width="0.9"/></svg><div class="t" style="left:332.8px;top:74.64999999999999px;line-height:12.3px;font-size:8.3px;color:#dfeae2;">告诉我你想要做什么</div><div style="left:525px;top:70px;width:43px;height:21.8px;background:#000;border-radius:3px"></div><svg style="left:530px;top:75px;" width="13" height="13" viewBox="0 0 13 13"><circle cx="5.5" cy="4" r="3.2" fill="none" stroke="#fff" stroke-width="1"/><path d="M0.8 12 Q1.5 7.5 5.5 7.5 Q8 7.5 9 9" fill="none" stroke="#fff" stroke-width="1"/><path d="M9.5 9V13M7.5 11H11.5" stroke="#fff" stroke-width="1"/></svg><div class="t" style="left:544px;top:74.5px;line-height:13px;font-size:9px;color:#f4f4f4;-webkit-text-stroke:0.2px #fff">共享</div><div style="left:-200px;top:91.5px;width:779.5px;height:68px;background:#f3f3f3"></div><div style="left:-200px;top:159.5px;width:779.5px;height:1px;background:#d4d4d4"></div><div class="rb" style="left:0;top:0"><div style="left:-200px;top:100.2px;width:305px;height:16.4px;background:#fff;border:1px solid #c6c6c6;box-sizing:border-box"></div><div class="t" style="left:-4.5px;top:101.8px;line-height:13px;font-size:9px;color:#5a3f5e;">等线</div><svg style="left:97px;top:106.5px;" width="6" height="4" viewBox="0 0 6 4"><path d="M0.5 0.5 L5.5 0.5 L3 3.5 Z" fill="#6a4f6e"/></svg><div style="left:105.8px;top:100.2px;width:28.6px;height:16.4px;background:#fff;border:1px solid #c6c6c6;box-sizing:border-box"></div><div class="t" style="left:108px;top:101.75px;line-height:13.5px;font-size:9.5px;color:#5a3f5e;letter-spacing:-0.3px">11</div><svg style="left:126px;top:106.5px;" width="6" height="4" viewBox="0 0 6 4"><path d="M0.5 0.5 L5.5 0.5 L3 3.5 Z" fill="#6a4f6e"/></svg><div class="t" style="left:42.5px;width:200px;text-align:center;top:101.5px;line-height:14px;font-size:10px;color:#3b6b4c;">A</div><svg style="left:146px;top:102.5px;" width="4" height="2" viewBox="0 0 4 2"><path d="M0 2L2 0L4 2Z" fill="#2b7cd3"/></svg><div class="t" style="left:58.30000000000001px;width:200px;text-align:center;top:102.05px;line-height:13.5px;font-size:9.5px;color:#3b6b4c;">A</div><svg style="left:161px;top:102.5px;" width="4" height="2" viewBox="0 0 4 2"><path d="M0 0L2 2L4 0Z" fill="#2b7cd3"/></svg><div class="t" style="left:-100.5px;width:200px;text-align:center;top:123.0px;line-height:14px;font-size:10px;color:#3b6b4c;font-weight:bold">B</div><div class="t" style="left:-84.5px;width:200px;text-align:center;top:123.0px;line-height:14px;font-size:10px;color:#5a3f5e;font-style:italic;font-family:Liberation Serif,serif">I</div><div class="t" style="left:-67.5px;width:200px;text-align:center;top:122.5px;line-height:14px;font-size:10px;color:#3b6b4c;font-weight:bold"><u>U</u></div><svg style="left:41.5px;top:128px;" width="6" height="4" viewBox="0 0 6 4"><path d="M0.5 0.5 L5.5 0.5 L3 3.5 Z" fill="#4f7f60"/></svg><div style="left:52.5px;top:122px;width:1px;height:17px;background:#d5d5d5"></div><svg style="left:58px;top:124.5px;" width="11" height="12" viewBox="0 0 11 12"><rect x="0.5" y="0.5" width="10" height="10" fill="none" stroke="#6a9a7a" stroke-dasharray="1.2 0.8"/><path d="M5.5 0.5V10.5M0.5 5.5H10.5" stroke="#9ab8a5" stroke-dasharray="1 1"/><path d="M0 10.8H11" stroke="#3b7a52" stroke-width="1.2"/></svg><svg style="left:72px;top:128px;" width="6" height="4" viewBox="0 0 6 4"><path d="M0.5 0.5 L5.5 0.5 L3 3.5 Z" fill="#4f7f60"/></svg><div style="left:83.5px;top:122px;width:1px;height:17px;background:#d5d5d5"></div><svg style="left:89px;top:121.5px;" width="12" height="11" viewBox="0 0 12 11"><path d="M1.5 6L5.5 2.5L9.5 6.5L6 10L1.5 6Z" fill="#fff" stroke="#4a8a5a" stroke-width="0.9"/><path d="M4.5 4V0.8" stroke="#7a4a80" stroke-width="1"/><path d="M10 6Q11.8 8 10.5 9.5" stroke="#2b7cd3" fill="none" stroke-width="1.4"/></svg><div style="left:88.6px;top:133.2px;width:11.5px;height:2.6px;background:#d8c84a"></div><svg style="left:103px;top:128px;" width="6" height="4" viewBox="0 0 6 4"><path d="M0.5 0.5 L5.5 0.5 L3 3.5 Z" fill="#4f7f60"/></svg><div class="t" style="left:19px;width:200px;text-align:center;top:122.05000000000001px;line-height:13.5px;font-size:9.5px;color:#3b6b4c;">A</div><div style="left:113px;top:133.2px;width:11.6px;height:2.6px;background:#d9372a"></div><svg style="left:127.5px;top:128px;" width="6" height="4" viewBox="0 0 6 4"><path d="M0.5 0.5 L5.5 0.5 L3 3.5 Z" fill="#4f7f60"/></svg><div style="left:138.6px;top:122px;width:1px;height:17px;background:#d5d5d5"></div><div class="t" style="left:48px;width:200px;text-align:center;top:121.0px;line-height:10px;font-size:6px;color:#6b5a6b;">wén</div><div class="t" style="left:48px;width:200px;text-align:center;top:127.5px;line-height:11px;font-size:7px;color:#2b7cd3;">文</div><svg style="left:158.5px;top:128px;" width="6" height="4" viewBox="0 0 6 4"><path d="M0.5 0.5 L5.5 0.5 L3 3.5 Z" fill="#4f7f60"/></svg><div class="t" style="left:-26.5px;width:200px;text-align:center;top:145.8px;line-height:13px;font-size:9px;color:#244f34;">字体</div><svg style="left:160.5px;top:149.5px;" width="6" height="6" viewBox="0 0 6 6"><path d="M0.5 5.5V0.5H5.5" fill="none" stroke="#aaa" stroke-width="0.7"/><path d="M1.8 1.8L5 5M2.8 5.5H5.5V2.8" fill="none" stroke="#4a8a9a" stroke-width="0.8"/></svg><div style="left:169.4px;top:95px;width:1px;height:61px;background:#d5d5d5"></div><div style="left:188px;top:94px;width:16px;height:32.7px;background:#d5d0d2"></div><svg style="left:175px;top:95px;" width="12" height="8" viewBox="0 0 12 8"><rect x="0" y="0.6" width="11" height="1.1" fill="#6f8f7b"/><rect x="1.5" y="3" width="8.5" height="1.6" fill="#aab8ae"/><rect x="0" y="5.6" width="11" height="1.1" fill="#6f8f7b"/></svg><svg style="left:191px;top:98px;" width="12" height="8" viewBox="0 0 12 8"><rect x="0" y="0.6" width="11" height="1.3" fill="#7a4a80"/><path d="M0 2.5H11L10 6.8H1Z" fill="#8fb09b"/></svg><svg style="left:207px;top:102px;" width="12" height="7" viewBox="0 0 12 7"><rect x="0" y="0.3" width="11" height="1" fill="#6f8f7b"/><rect x="0" y="2.7" width="11" height="1.1" fill="#6f8f7b"/><rect x="0" y="5" width="11" height="1.1" fill="#6f8f7b"/></svg><svg style="left:224px;top:95px;" width="13" height="12" viewBox="0 0 13 12"><rect x="0.5" y="0.5" width="7.5" height="4" fill="none" stroke="#6f8f7b" stroke-width="0.9"/><rect x="0.5" y="6.5" width="7.5" height="4" fill="none" stroke="#6f8f7b" stroke-width="0.9"/><path d="M2 2.5H9.5M2 8.5H4.5M9.5 1.5Q12.3 2.5 12 6Q11.5 8.5 9 8.5M10.3 7.3L9 8.5L10.3 9.7" fill="none" stroke="#2b7cd3" stroke-width="0.9"/></svg><svg style="left:175px;top:114.5px;" width="12" height="9" viewBox="0 0 12 9"><rect x="0" y="0.5" width="11" height="1.1" fill="#6f8f7b"/><rect x="0" y="2.6" width="7" height="1.1" fill="#6f8f7b"/><rect x="0" y="4.7" width="11" height="1.1" fill="#6f8f7b"/><rect x="0" y="6.8" width="7" height="1.1" fill="#6f8f7b"/></svg><svg style="left:191px;top:114.5px;" width="12" height="9" viewBox="0 0 12 9"><rect x="0" y="0.5" width="11" height="1.2" fill="#7a4a80"/><rect x="2" y="2.6" width="7" height="1.2" fill="#7a4a80"/><path d="M0 4.5H11L9 8.5H2Z" fill="#8fb09b"/></svg><svg style="left:207px;top:114.5px;" width="12" height="9" viewBox="0 0 12 9"><rect x="0" y="0.5" width="11" height="1.1" fill="#6f8f7b"/><rect x="3" y="2.6" width="8" height="1.1" fill="#6f8f7b"/><rect x="0" y="4.7" width="11" height="1.1" fill="#6f8f7b"/><rect x="3" y="6.8" width="8" height="1.1" fill="#6f8f7b"/></svg><svg style="left:224px;top:112.5px;" width="12" height="12" viewBox="0 0 12 12"><rect x="0.5" y="0.5" width="11" height="10.5" fill="none" stroke="#6f8f7b" stroke-width="0.9"/><path d="M0.5 3H11.5M0.5 8.5H11.5M6 0.5V3M6 8.5V11" stroke="#6f8f7b" stroke-width="0.8"/><path d="M2 5.8H10M3.3 4.6L2 5.8L3.3 7M8.7 4.6L10 5.8L8.7 7" fill="none" stroke="#2b7cd3" stroke-width="0.9"/><rect x="5.5" y="0" width="1" height="1.5" fill="#7a4a80"/><rect x="5.5" y="10" width="1" height="1.5" fill="#7a4a80"/></svg><svg style="left:239.5px;top:116px;" width="6" height="4" viewBox="0 0 6 4"><path d="M0.5 0.5 L5.5 0.5 L3 3.5 Z" fill="#4f7f60"/></svg><svg style="left:174.5px;top:130px;" width="12" height="11" viewBox="0 0 12 11"><rect x="0" y="0" width="11.5" height="1.1" fill="#6f8f7b"/><rect x="0" y="9.3" width="11.5" height="1.1" fill="#6f8f7b"/><rect x="6" y="2.5" width="5.5" height="5.5" fill="#c9c9c9"/><rect x="6" y="2.5" width="5.5" height="1" fill="#6f8f7b"/><path d="M0.5 5H5.5M2.5 3L0.5 5L2.5 7" fill="none" stroke="#2b7cd3" stroke-width="1.2"/></svg><svg style="left:190.5px;top:130px;" width="12" height="11" viewBox="0 0 12 11"><rect x="0" y="0" width="11.5" height="1.1" fill="#6f8f7b"/><rect x="0" y="9.3" width="11.5" height="1.1" fill="#6f8f7b"/><rect x="6" y="2.5" width="5.5" height="5.5" fill="#c9c9c9"/><rect x="6" y="2.5" width="5.5" height="1" fill="#6f8f7b"/><path d="M0 5H5M3 3L5 5L3 7" fill="none" stroke="#2b7cd3" stroke-width="1.2"/></svg><div style="left:207px;top:127px;width:1px;height:15px;background:#d5d5d5"></div><svg style="left:212.5px;top:129px;" width="13" height="13" viewBox="0 0 13 13"><path d="M1.5 6.5L5 3M3 8L6.5 4.5M4.5 2.5L7.5 5.5M2 5L5 8" fill="none" stroke="#6a8a76" stroke-width="1"/><path d="M3 12L11 4M9.5 3.5H11.5V5.5" fill="none" stroke="#7a5a7e" stroke-width="1"/></svg><svg style="left:226.5px;top:134px;" width="6" height="4" viewBox="0 0 6 4"><path d="M0.5 0.5 L5.5 0.5 L3 3.5 Z" fill="#4f7f60"/></svg><div class="t" style="left:104.30000000000001px;width:200px;text-align:center;top:145.8px;line-height:13px;font-size:9px;color:#244f34;">对齐方式</div><svg style="left:242px;top:149.5px;" width="6" height="6" viewBox="0 0 6 6"><path d="M0.5 5.5V0.5H5.5" fill="none" stroke="#aaa" stroke-width="0.7"/><path d="M1.8 1.8L5 5M2.8 5.5H5.5V2.8" fill="none" stroke="#4a8a9a" stroke-width="0.8"/></svg><div style="left:250.6px;top:95px;width:1px;height:61px;background:#d5d5d5"></div><div style="left:254.4px;top:94.3px;width:55.1px;height:16.4px;background:#fff;border:1px solid #c6c6c6;box-sizing:border-box"></div><div class="t" style="left:256.5px;top:96.6px;line-height:12.4px;font-size:8.4px;color:#244f34;letter-spacing:0.5px">常规</div><svg style="left:301px;top:101px;" width="6" height="4" viewBox="0 0 6 4"><path d="M0.5 0.5 L5.5 0.5 L3 3.5 Z" fill="#4f7f60"/></svg><svg style="left:256px;top:113px;" width="12" height="12" viewBox="0 0 12 12"><rect x="0.5" y="0.5" width="11" height="5" fill="#dbe8f5" stroke="#2b7cd3" stroke-width="0.8"/><circle cx="6" cy="3" r="1.5" fill="#2b7cd3"/><rect x="2" y="7" width="8" height="2" fill="#e8d878"/><rect x="2" y="10" width="6" height="2" fill="#e8d878"/></svg><svg style="left:270px;top:117.5px;" width="6" height="4" viewBox="0 0 6 4"><path d="M0.5 0.5 L5.5 0.5 L3 3.5 Z" fill="#4f7f60"/></svg><div class="t" style="left:186.5px;width:200px;text-align:center;top:112.25px;line-height:14.5px;font-size:10.5px;color:#3b5a48;">%</div><svg style="left:300.5px;top:117.5px;" width="3" height="4" viewBox="0 0 3 4"><path d="M1.5 0.5A1 1 0 0 1 2.5 1.5Q2.5 3 1 3.8" fill="#5a3f5e" stroke="#5a3f5e" stroke-width="0.8"/></svg><svg style="left:255px;top:129px;" width="13" height="13" viewBox="0 0 13 13"><text x="4" y="5.8" font-size="6.5" fill="#3b6b4c" font-family="Liberation Sans" textLength="6" lengthAdjust="spacingAndGlyphs">.0</text><text x="1.5" y="12" font-size="6.5" fill="#3b6b4c" font-family="Liberation Sans" textLength="9" lengthAdjust="spacingAndGlyphs">.00</text><path d="M0.5 3.5H4.5M2 2L0.5 3.5L2 5" stroke="#2b7cd3" fill="none" stroke-width="1"/></svg><svg style="left:272px;top:129px;" width="13" height="13" viewBox="0 0 13 13"><text x="2" y="5.8" font-size="6.5" fill="#3b6b4c" font-family="Liberation Sans" textLength="9" lengthAdjust="spacingAndGlyphs">.00</text><text x="5" y="12" font-size="6.5" fill="#5a3f5e" font-family="Liberation Sans" textLength="6" lengthAdjust="spacingAndGlyphs">.0</text><path d="M0.5 10H5M3.5 8.5L5 10L3.5 11.5" stroke="#2b7cd3" fill="none" stroke-width="1"/></svg><div class="t" style="left:176.5px;width:200px;text-align:center;top:145.8px;line-height:13px;font-size:9px;color:#244f34;">数字</div><svg style="left:304px;top:149.5px;" width="6" height="6" viewBox="0 0 6 6"><path d="M0.5 5.5V0.5H5.5" fill="none" stroke="#aaa" stroke-width="0.7"/><path d="M1.8 1.8L5 5M2.8 5.5H5.5V2.8" fill="none" stroke="#4a8a9a" stroke-width="0.8"/></svg><div style="left:313.4px;top:95px;width:1px;height:61px;background:#d5d5d5"></div><svg style="left:318.5px;top:96px;" width="12" height="12" viewBox="0 0 12 12"><rect x="0.5" y="0.5" width="10" height="10" fill="#fff" stroke="#9a9a9a" stroke-width="0.7"/><rect x="0" y="0" width="5" height="2.5" fill="#d9372a"/><rect x="0" y="3.5" width="5" height="2.5" fill="#3a9a8a"/><rect x="0" y="7" width="5" height="2.5" fill="#d9372a"/><path d="M5.5 3.5H10.5M5.5 7H8" stroke="#9a9a9a" stroke-width="0.7"/><rect x="6" y="6" width="5.5" height="5.5" fill="#fff" stroke="#444" stroke-width="0.8"/><path d="M7.5 8H10M7.5 9.8H10" stroke="#444" stroke-width="0.7"/></svg><div class="t" style="left:332.7px;top:96.6px;line-height:12.4px;font-size:8.4px;color:#244f34;letter-spacing:0.5px">条件格式</div><svg style="left:368.5px;top:101.5px;" width="6" height="4" viewBox="0 0 6 4"><path d="M0.5 0.5 L5.5 0.5 L3 3.5 Z" fill="#4f7f60"/></svg><svg style="left:318.5px;top:113px;" width="12" height="12" viewBox="0 0 12 12"><rect x="0.5" y="0.5" width="11" height="9" fill="#fff" stroke="#6f8f7b" stroke-width="0.8"/><path d="M0.5 3.5H11.5M4 0.5V9.5M8 0.5V9.5M0.5 6.5H11.5" stroke="#9fb8a8" stroke-width="0.6"/><path d="M3 11L9 5L11 6L5 12Z" fill="#2b7cd3"/></svg><div class="t" style="left:332.7px;top:113.1px;line-height:12.4px;font-size:8.4px;color:#244f34;letter-spacing:0.5px">套用表格格式</div><svg style="left:385.5px;top:117.5px;" width="6" height="4" viewBox="0 0 6 4"><path d="M0.5 0.5 L5.5 0.5 L3 3.5 Z" fill="#4f7f60"/></svg><svg style="left:318.5px;top:129px;" width="12" height="12" viewBox="0 0 12 12"><rect x="0.5" y="0.5" width="11" height="9" fill="#dbe8f5" stroke="#6f8f7b" stroke-width="0.8"/><path d="M3 11L9 5L11 6L5 12Z" fill="#2b7cd3"/></svg><div class="t" style="left:332.7px;top:129.10000000000002px;line-height:12.4px;font-size:8.4px;color:#244f34;letter-spacing:0.5px">单元格样式</div><svg style="left:377.5px;top:133.5px;" width="6" height="4" viewBox="0 0 6 4"><path d="M0.5 0.5 L5.5 0.5 L3 3.5 Z" fill="#4f7f60"/></svg><div class="t" style="left:255.5px;width:200px;text-align:center;top:145.8px;line-height:13px;font-size:9px;color:#244f34;">样式</div><div style="left:397.6px;top:95px;width:1px;height:61px;background:#d5d5d5"></div><svg style="left:404px;top:96px;" width="13" height="12" viewBox="0 0 13 12"><path d="M0.5 0.5H8.5V11.5H0.5ZM0.5 4H8.5M0.5 8H8.5M4.5 0.5V11.5" fill="none" stroke="#6f8f7b" stroke-width="0.8"/><rect x="4.5" y="4" width="8" height="4" fill="#fff" stroke="#6f8f7b" stroke-width="0.8"/><path d="M1.5 6H10M3 4.8L1.5 6L3 7.2" stroke="#2b7cd3" fill="none" stroke-width="0.9"/></svg><div class="t" style="left:417.8px;top:96.6px;line-height:12.4px;font-size:8.4px;color:#244f34;letter-spacing:0.5px">插入</div><svg style="left:441.5px;top:101.5px;" width="6" height="4" viewBox="0 0 6 4"><path d="M0.5 0.5 L5.5 0.5 L3 3.5 Z" fill="#4f7f60"/></svg><svg style="left:404px;top:113px;" width="13" height="12" viewBox="0 0 13 12"><path d="M0.5 0.5H8.5V11.5H0.5ZM0.5 4H8.5M0.5 8H8.5M4.5 0.5V11.5" fill="none" stroke="#6f8f7b" stroke-width="0.8"/><rect x="4.5" y="4" width="4" height="4" fill="#fff"/><path d="M7 2L11.5 6.5M11.5 2L7 6.5" stroke="#e0a020" stroke-width="1"/></svg><div class="t" style="left:417.8px;top:113.1px;line-height:12.4px;font-size:8.4px;color:#244f34;letter-spacing:0.5px">删除</div><svg style="left:441.5px;top:117.5px;" width="6" height="4" viewBox="0 0 6 4"><path d="M0.5 0.5 L5.5 0.5 L3 3.5 Z" fill="#4f7f60"/></svg><svg style="left:404px;top:129px;" width="12" height="12" viewBox="0 0 12 12"><rect x="0.5" y="0.5" width="11" height="11" fill="#fff" stroke="#6f8f7b" stroke-width="0.8"/><path d="M0.5 1H11.5" stroke="#2b7cd3" stroke-width="1.2"/><path d="M4 1V11.5M8 1V11.5M0.5 4H11.5M0.5 8H11.5" stroke="#9fb8a8" stroke-width="0.6" stroke-dasharray="1 1"/><rect x="4" y="4" width="4" height="4" fill="#2b7cd3" opacity="0.7"/></svg><div class="t" style="left:417.8px;top:129.10000000000002px;line-height:12.4px;font-size:8.4px;color:#244f34;letter-spacing:0.5px">格式</div><svg style="left:437.5px;top:133.5px;" width="6" height="4" viewBox="0 0 6 4"><path d="M0.5 0.5 L5.5 0.5 L3 3.5 Z" fill="#4f7f60"/></svg><div class="t" style="left:325.8px;width:200px;text-align:center;top:145.8px;line-height:13px;font-size:9px;color:#244f34;">单元格</div><div style="left:452.5px;top:95px;width:1px;height:61px;background:#d5d5d5"></div><svg style="left:457.5px;top:96px;" width="12" height="12" viewBox="0 0 12 12"><path d="M11 1.2H1.2L6.2 6L1.2 10.8H11" fill="none" stroke="#2e6b47" stroke-width="1.6"/></svg><svg style="left:472px;top:101.5px;" width="6" height="4" viewBox="0 0 6 4"><path d="M0.5 0.5 L5.5 0.5 L3 3.5 Z" fill="#4f7f60"/></svg><svg style="left:458.5px;top:112.5px;" width="12" height="12" viewBox="0 0 12 12"><rect x="0.5" y="0.5" width="10" height="11" fill="#fff" stroke="#6f8f7b" stroke-width="0.9"/><path d="M0.5 1.5H10.5" stroke="#7a5a7e" stroke-width="1.4"/><path d="M5.5 4V9.5M3 7L5.5 9.5L8 7" stroke="#2b7cd3" fill="none" stroke-width="1.2"/></svg><svg style="left:471.5px;top:117.5px;" width="6" height="4" viewBox="0 0 6 4"><path d="M0.5 0.5 L5.5 0.5 L3 3.5 Z" fill="#4f7f60"/></svg><svg style="left:459px;top:130px;" width="11" height="10" viewBox="0 0 11 10"><path d="M1 7L6 2L9 5L4 10Z" fill="#d8b8a8"/><path d="M1 7L4 10" stroke="#c49080"/></svg><svg style="left:471.5px;top:134px;" width="6" height="4" viewBox="0 0 6 4"><path d="M0.5 0.5 L5.5 0.5 L3 3.5 Z" fill="#4f7f60"/></svg><div class="t" style="left:387px;width:200px;text-align:center;top:92.5px;line-height:10px;font-size:6px;color:#2b7cd3;">A</div><div class="t" style="left:387px;width:200px;text-align:center;top:99.5px;line-height:10px;font-size:6px;color:#2b7cd3;">Z</div><svg style="left:489px;top:99px;" width="6" height="6" viewBox="0 0 6 6"><path d="M0 0H6L3.5 3V6H2.5V3Z" fill="#3b6b4c"/></svg><svg style="left:496.5px;top:100px;" width="6" height="4" viewBox="0 0 6 4"><path d="M0.5 0.5 L5.5 0.5 L3 3.5 Z" fill="#4f7f60"/></svg><svg style="left:484px;top:113.5px;" width="11" height="11" viewBox="0 0 11 11"><circle cx="6.5" cy="4.5" r="3.3" fill="none" stroke="#2b7cd3" stroke-width="1.3"/><path d="M4 7L1 10" stroke="#2b7cd3" stroke-width="1.8"/></svg><svg style="left:496.5px;top:117px;" width="6" height="4" viewBox="0 0 6 4"><path d="M0.5 0.5 L5.5 0.5 L3 3.5 Z" fill="#4f7f60"/></svg><div class="t" style="left:380.5px;width:200px;text-align:center;top:145.8px;line-height:13px;font-size:9px;color:#244f34;">编辑</div><div style="left:508px;top:95px;width:1px;height:61px;background:#d5d5d5"></div><svg style="left:516px;top:99.5px;" width="20" height="16" viewBox="0 0 20 16"><path d="M1 4H6L8 1H12L14 4H19V15.5H1Z" fill="#7d6b7e"/><circle cx="10" cy="9.5" r="3.7" fill="#eee"/><circle cx="10" cy="9.5" r="2.2" fill="#7d6b7e"/><rect x="2.5" y="5" width="2" height="1.3" fill="#eee"/></svg><div class="t" style="left:426.5px;width:200px;text-align:center;top:119.8px;line-height:12.4px;font-size:8.4px;color:#244f34;letter-spacing:0.5px">照相机</div><div class="t" style="left:426.5px;width:200px;text-align:center;top:146.05px;line-height:12.5px;font-size:8.5px;color:#244f34;font-weight:bold">xiangji</div><div style="left:544px;top:95px;width:1px;height:61px;background:#d0d0d0"></div><svg style="left:565px;top:150px;" width="8" height="5" viewBox="0 0 8 5"><path d="M0.5 4.5L4 1L7.5 4.5" fill="none" stroke="#555" stroke-width="1"/></svg></div><div style="left:-200px;top:160.5px;width:779.5px;height:47px;background:#e6e6e6"></div><div style="left:-200px;top:167px;width:204.5px;height:20.6px;background:#f9f9f9;border:1px solid #d0d0d0;box-sizing:border-box"></div><svg style="left:14px;top:173px;" width="3" height="10" viewBox="0 0 3 10"><circle cx="1.5" cy="1.5" r="0.8" fill="#999"/><circle cx="1.5" cy="5" r="0.8" fill="#999"/><circle cx="1.5" cy="8.5" r="0.8" fill="#999"/></svg><div style="left:27px;top:167px;width:78.5px;height:20.6px;background:#f7f7f7;border:1px solid #d4d4d4;box-sizing:border-box"></div><svg style="left:36px;top:173px;" width="8" height="8" viewBox="0 0 8 8"><path d="M0.5 0.5L7.5 7.5M7.5 0.5L0.5 7.5" stroke="#b5b5b5"/></svg><svg style="left:61px;top:173px;" width="10" height="8" viewBox="0 0 10 8"><path d="M0.5 4L3.5 7.5L9.5 0.5" fill="none" stroke="#b5b5b5" stroke-width="1.1"/></svg><div class="t" style="left:88px;top:169.0px;line-height:15px;font-size:11px;color:#3e5e4a;font-family:Liberation Serif,serif"><i>f</i><span style="font-size:8px;position:relative;top:1px"><i>x</i></span></div><div style="left:108.5px;top:167px;width:467px;height:20.6px;background:#f9f9f9;border:1px solid #d0d0d0;box-sizing:border-box"></div><svg style="left:565px;top:175px;" width="8" height="5" viewBox="0 0 8 5"><path d="M0.5 0.5L4 4L7.5 0.5" fill="none" stroke="#555" stroke-width="1"/></svg><div class="t" style="left:-126.0px;width:200px;text-align:center;top:193.55px;line-height:15.5px;font-size:11.5px;color:#2c5e3f;transform:scaleX(0.78)">A</div><div style="left:-0.6px;top:195px;width:1px;height:12px;background:#d2d2d2"></div><div class="t" style="left:-74.0px;width:200px;text-align:center;top:193.55px;line-height:15.5px;font-size:11.5px;color:#2c5e3f;transform:scaleX(0.78)">B</div><div style="left:51.4px;top:195px;width:1px;height:12px;background:#d2d2d2"></div><div class="t" style="left:-22.099999999999994px;width:200px;text-align:center;top:193.55px;line-height:15.5px;font-size:11.5px;color:#2c5e3f;transform:scaleX(0.78)">C</div><div style="left:103.2px;top:195px;width:1px;height:12px;background:#d2d2d2"></div><div class="t" style="left:29.650000000000006px;width:200px;text-align:center;top:193.55px;line-height:15.5px;font-size:11.5px;color:#2c5e3f;transform:scaleX(0.78)">D</div><div style="left:154.9px;top:195px;width:1px;height:12px;background:#d2d2d2"></div><div class="t" style="left:81.5px;width:200px;text-align:center;top:193.55px;line-height:15.5px;font-size:11.5px;color:#2c5e3f;transform:scaleX(0.78)">E</div><div style="left:206.9px;top:195px;width:1px;height:12px;background:#d2d2d2"></div><div class="t" style="left:133.4px;width:200px;text-align:center;top:193.55px;line-height:15.5px;font-size:11.5px;color:#2c5e3f;transform:scaleX(0.78)">F</div><div style="left:258.7px;top:195px;width:1px;height:12px;background:#d2d2d2"></div><div class="t" style="left:185.25px;width:200px;text-align:center;top:193.55px;line-height:15.5px;font-size:11.5px;color:#2c5e3f;transform:scaleX(0.78)">G</div><div style="left:310.59999999999997px;top:195px;width:1px;height:12px;background:#d2d2d2"></div><div class="t" style="left:237.0px;width:200px;text-align:center;top:193.55px;line-height:15.5px;font-size:11.5px;color:#2c5e3f;transform:scaleX(0.78)">H</div><div style="left:362.2px;top:195px;width:1px;height:12px;background:#d2d2d2"></div><div class="t" style="left:288.65px;width:200px;text-align:center;top:193.55px;line-height:15.5px;font-size:11.5px;color:#2c5e3f;transform:scaleX(0.78)">I</div><div style="left:413.9px;top:195px;width:1px;height:12px;background:#d2d2d2"></div><div class="t" style="left:340.55px;width:200px;text-align:center;top:193.55px;line-height:15.5px;font-size:11.5px;color:#2c5e3f;transform:scaleX(0.78)">J</div><div style="left:466.0px;top:195px;width:1px;height:12px;background:#d2d2d2"></div><div class="t" style="left:392.45px;width:200px;text-align:center;top:193.55px;line-height:15.5px;font-size:11.5px;color:#2c5e3f;transform:scaleX(0.78)">K</div><div style="left:517.6999999999999px;top:195px;width:1px;height:12px;background:#d2d2d2"></div><div class="t" style="left:444.15px;width:200px;text-align:center;top:193.55px;line-height:15.5px;font-size:11.5px;color:#2c5e3f;transform:scaleX(0.78)">L</div><div style="left:569.4px;top:195px;width:1px;height:12px;background:#d2d2d2"></div><div style="left:-200px;top:207.4px;width:763.5px;height:230px;background:#fcfcfc"></div><div style="left:-200px;top:236.8px;width:763.5px;height:1px;background:#e0e0e0"></div><div style="left:-200px;top:266.8px;width:763.5px;height:1px;background:#e0e0e0"></div><div style="left:-200px;top:295.8px;width:763.5px;height:1px;background:#e0e0e0"></div><div style="left:-200px;top:325.3px;width:763.5px;height:1px;background:#e0e0e0"></div><div style="left:-200px;top:354.7px;width:763.5px;height:1px;background:#e0e0e0"></div><div style="left:-200px;top:368.3px;width:763.5px;height:1px;background:#e0e0e0"></div><div style="left:-200px;top:381.8px;width:763.5px;height:1px;background:#e0e0e0"></div><div style="left:-200px;top:395.8px;width:763.5px;height:1px;background:#e0e0e0"></div><div style="left:-200px;top:410px;width:763.5px;height:1px;background:#e0e0e0"></div><div style="left:-200px;top:423.3px;width:763.5px;height:1px;background:#e0e0e0"></div><div style="left:-200px;top:436.3px;width:763.5px;height:1px;background:#e0e0e0"></div><div style="left:-0.6px;top:207.4px;width:1px;height:230px;background:#e2e2e2"></div><div style="left:51.4px;top:207.4px;width:1px;height:230px;background:#e2e2e2"></div><div style="left:103.2px;top:207.4px;width:1px;height:230px;background:#e2e2e2"></div><div style="left:154.9px;top:207.4px;width:1px;height:230px;background:#e2e2e2"></div><div style="left:206.9px;top:207.4px;width:1px;height:230px;background:#e2e2e2"></div><div style="left:258.7px;top:207.4px;width:1px;height:230px;background:#e2e2e2"></div><div style="left:310.59999999999997px;top:207.4px;width:1px;height:230px;background:#e2e2e2"></div><div style="left:362.2px;top:207.4px;width:1px;height:230px;background:#e2e2e2"></div><div style="left:413.9px;top:207.4px;width:1px;height:230px;background:#e2e2e2"></div><div style="left:466.0px;top:207.4px;width:1px;height:230px;background:#e2e2e2"></div><div style="left:517.6999999999999px;top:207.4px;width:1px;height:230px;background:#e2e2e2"></div><div style="left:-200px;top:207px;width:764px;height:1px;background:#7fb08f"></div><div style="left:563.2px;top:207px;width:1px;height:230.5px;background:#8cb89a"></div><div style="left:48.7px;top:437px;width:515.3px;height:1px;background:#8cb89a"></div><div class="t" style="left:2.5px;top:210.75px;line-height:14.5px;font-size:10.5px;color:#111;-webkit-text-stroke:0.45px #111">1月份报表</div><div style="left:-200px;top:227.4px;width:303.8px;height:29.6px;background:#217346"></div><div class="t" style="left:-73.5px;width:200px;text-align:center;top:235.6px;line-height:14.8px;font-size:10.8px;color:#fff;-webkit-text-stroke:0.35px #fff">销售人员</div><div class="t" style="left:-22px;width:200px;text-align:center;top:235.6px;line-height:14.8px;font-size:10.8px;color:#fff;-webkit-text-stroke:0.35px #fff">销售业绩</div><div style="left:-200px;top:257px;width:303.8px;height:29.5px;background:#fcfcfc"></div><div class="t" style="left:-74px;width:200px;text-align:center;top:265.75px;line-height:15px;font-size:11px;color:#2a5a3e;">张磊</div><div class="t" style="left:-22px;width:200px;text-align:center;top:265.75px;line-height:15px;font-size:11px;color:#2a5a3e;">3600</div><div style="left:-200px;top:286.5px;width:303.8px;height:29.5px;background:#fcfcfc"></div><div class="t" style="left:-74px;width:200px;text-align:center;top:295.25px;line-height:15px;font-size:11px;color:#2a5a3e;">王艳萍</div><div class="t" style="left:-22px;width:200px;text-align:center;top:295.25px;line-height:15px;font-size:11px;color:#2a5a3e;">5000</div><div style="left:-200px;top:316px;width:303.8px;height:29.5px;background:#fcfcfc"></div><div class="t" style="left:-74px;width:200px;text-align:center;top:324.75px;line-height:15px;font-size:11px;color:#2a5a3e;">杨澜</div><div class="t" style="left:-22px;width:200px;text-align:center;top:324.75px;line-height:15px;font-size:11px;color:#2a5a3e;">3980</div><div style="left:-200px;top:345.5px;width:303.8px;height:29.5px;background:#fcfcfc"></div><div class="t" style="left:-74px;width:200px;text-align:center;top:354.25px;line-height:15px;font-size:11px;color:#2a5a3e;">周光</div><div class="t" style="left:-22px;width:200px;text-align:center;top:354.25px;line-height:15px;font-size:11px;color:#2a5a3e;">5000</div><div style="left:-200px;top:375px;width:303.8px;height:29.600000000000023px;background:#fcfcfc"></div><div class="t" style="left:-74px;width:200px;text-align:center;top:383.8px;line-height:15px;font-size:11px;color:#2a5a3e;">陈东琪</div><div class="t" style="left:-22px;width:200px;text-align:center;top:383.8px;line-height:15px;font-size:11px;color:#2a5a3e;">6500</div><div style="left:-200px;top:404.6px;width:303.8px;height:29.399999999999977px;background:#fcfcfc"></div><div class="t" style="left:-74px;width:200px;text-align:center;top:413.3px;line-height:15px;font-size:11px;color:#2a5a3e;">马小玲</div><div class="t" style="left:-22px;width:200px;text-align:center;top:413.3px;line-height:15px;font-size:11px;color:#2a5a3e;">7000</div><div style="left:-200px;top:256.5px;width:304.3px;height:1px;background:#2d4f3a"></div><div style="left:-200px;top:286.0px;width:304.3px;height:1px;background:#2d4f3a"></div><div style="left:-200px;top:315.5px;width:304.3px;height:1px;background:#2d4f3a"></div><div style="left:-200px;top:345.0px;width:304.3px;height:1px;background:#2d4f3a"></div><div style="left:-200px;top:374.5px;width:304.3px;height:1px;background:#2d4f3a"></div><div style="left:-200px;top:404.1px;width:304.3px;height:1px;background:#2d4f3a"></div><div style="left:-200px;top:433.5px;width:304.3px;height:1px;background:#2d4f3a"></div><div style="left:103.4px;top:207.4px;width:1.2px;height:227px;background:#6a5870"></div><div style="left:51.8px;top:227.4px;width:1px;height:207px;background:#2d4f3a"></div><div style="left:-0.3px;top:227.4px;width:1.4px;height:207px;background:#2a4a36"></div><div style="left:-200px;top:433.5px;width:304.5px;height:1.4px;background:#4a3a4a"></div><div style="left:564.2px;top:194px;width:15.3px;height:243px;background:#e3e3e3"></div><div style="left:566.5px;top:196px;width:10px;height:10.5px;background:#fff;border:1px solid #cfcfcf;box-sizing:border-box"></div><svg style="left:568.5px;top:199px;" width="6" height="4" viewBox="0 0 6 4"><path d="M0 3.5L3 0.5L6 3.5Z" fill="#217346"/></svg><div style="left:566.5px;top:206.5px;width:10px;height:33.5px;background:#d8d8d8"></div><div style="left:566.5px;top:240px;width:10px;height:153px;background:#fff;border:1px solid #d0d0d0;box-sizing:border-box"></div><div style="left:566.5px;top:393px;width:10px;height:35px;background:#d8d8d8"></div><div style="left:566.5px;top:427.5px;width:10px;height:10px;background:#fff;border:1px solid #cfcfcf;box-sizing:border-box"></div><div style="left:565.8px;top:196px;width:11.4px;height:241.5px;border:1px solid #a9c7b2;box-sizing:border-box"></div><svg style="left:568.5px;top:431px;" width="6" height="4" viewBox="0 0 6 4"><path d="M0 0.5L3 3.5L6 0.5Z" fill="#4a7a5c"/></svg><div style="left:-200px;top:438px;width:779.5px;height:19.5px;background:#e6e6e6"></div><div style="left:-200px;top:435px;width:249px;height:20px;background:#fcfcfc"></div><div style="left:48.7px;top:437px;width:1.2px;height:18px;background:#7faa8e"></div><div style="left:-200px;top:453.5px;width:249.9px;height:1.5px;background:#217346"></div><div class="t" style="left:-76px;width:200px;text-align:center;top:438.75px;line-height:14.5px;font-size:10.5px;color:#2c5e3f;transform:scaleX(0.92)">Sheet1</div><svg style="left:73px;top:441px;" width="12" height="12" viewBox="0 0 12 12"><circle cx="6" cy="6" r="5" fill="none" stroke="#6b8f78" stroke-width="1"/><path d="M6 3V9M3 6H9" stroke="#6b8f78" stroke-width="1"/></svg><svg style="left:318px;top:443px;" width="3" height="10" viewBox="0 0 3 10"><circle cx="1.5" cy="1.5" r="0.7" fill="#888"/><circle cx="1.5" cy="5" r="0.7" fill="#888"/><circle cx="1.5" cy="8.5" r="0.7" fill="#888"/></svg><div style="left:331px;top:442.5px;width:10.5px;height:10.5px;background:#fff;border:1px solid #a9c7b2;box-sizing:border-box"></div><svg style="left:334px;top:445px;" width="4" height="6" viewBox="0 0 4 6"><path d="M3.5 0L0.5 3L3.5 6Z" fill="#217346"/></svg><div style="left:341.5px;top:442.5px;width:192px;height:10.5px;background:#fff;border:1px solid #a9c7b2;box-sizing:border-box"></div><div style="left:533.5px;top:442.5px;width:20px;height:10.5px;background:#d8d8d8"></div><div style="left:554px;top:442.5px;width:11px;height:10.5px;background:#fff;border:1px solid #a9c7b2;box-sizing:border-box"></div><svg style="left:557.5px;top:445px;" width="4" height="6" viewBox="0 0 4 6"><path d="M0.5 0L3.5 3L0.5 6Z" fill="#4a7a5c"/></svg><div style="left:-200px;top:456.8px;width:779.5px;height:17px;background:#ededed"></div><div style="left:-200px;top:473px;width:779.5px;height:1.2px;background:#8cb89a"></div><div style="left:362.2px;top:457px;width:26.6px;height:16px;background:#d4d0d4"></div><svg style="left:369px;top:460px;" width="12" height="11" viewBox="0 0 12 11"><rect x="0.5" y="0.5" width="11" height="10" fill="none" stroke="#7a5a7e"/><path d="M0.5 3.8H11.5M0.5 7.2H11.5M4.2 0.5V10.5M7.8 0.5V10.5" stroke="#7a5a7e" stroke-width="0.9"/></svg><svg style="left:397px;top:460px;" width="12" height="11" viewBox="0 0 12 11"><rect x="0.5" y="0.5" width="11" height="10" fill="none" stroke="#6b8f78"/><rect x="2.5" y="2.5" width="7" height="6" fill="#c5d5ca" stroke="#6b8f78" stroke-width="0.8"/></svg><svg style="left:424px;top:460px;" width="12" height="11" viewBox="0 0 12 11"><path d="M0.5 0.5H11.5V10.5H0.5ZM5.5 0.5V5.5H0.5" fill="none" stroke="#6b8f78"/></svg><div style="left:446px;top:465px;width:6px;height:1.2px;background:#555"></div><div style="left:455px;top:465px;width:70px;height:1px;background:#b5b5b5"></div><div style="left:489.5px;top:461px;width:3px;height:9px;background:#3b7a52"></div><div class="t" style="left:432px;width:200px;text-align:center;top:458.5px;line-height:14px;font-size:10px;color:#555;font-weight:bold">+</div><div class="t" style="left:453.5px;width:200px;text-align:center;top:458.75px;line-height:13.5px;font-size:9.5px;color:#666;">100%</div><div style="left:578.5px;top:91.5px;width:1.2px;height:68.5px;background:#c9c9c9"></div><div style="left:578.5px;top:160px;width:1.2px;height:314px;background:#8cb89a"></div></div></div><div class="clip" style="left:-70.3px;top:44px;width:649.8px;height:430px"><div style="left:70.3px;top:-44px;width:640px;height:474px"><div style="left:-200px;top:44px;width:779.5px;height:47.5px;background:#217346"></div><svg style="left:-36px;top:50px;" width="12" height="12" viewBox="0 0 12 12"><path d="M3 3 L1 5.5 L3 8 M1.2 5.5 H7.5 Q10.5 5.5 10.5 8 Q10.5 10.5 7.5 10.5 H5" fill="none" stroke="#8fb89e" stroke-width="1"/></svg><svg style="left:-11px;top:50px;" width="12" height="12" viewBox="0 0 12 12"><path d="M9 3 L11 5.5 L9 8 M10.8 5.5 H4.5 Q1.5 5.5 1.5 8 Q1.5 10.5 4.5 10.5 H7" fill="none" stroke="#8fb89e" stroke-width="1"/></svg><svg style="left:-21px;top:56px;" width="4" height="2" viewBox="0 0 4 2"><rect width="3" height="1" fill="#8fb89e"/></svg><svg style="left:-55.5px;top:51px;" width="11" height="11" viewBox="0 0 11 11"><path d="M0.5 0.5H8.5L10.5 2.5V10.5H0.5Z" fill="none" stroke="#e9f1ec"/><rect x="3" y="0.5" width="5" height="3" fill="#e9f1ec"/><rect x="2.5" y="6.5" width="6" height="4" fill="#e9f1ec"/></svg><svg style="left:4px;top:56px;" width="4" height="2" viewBox="0 0 4 2"><rect width="3" height="1" fill="#8fb89e"/></svg><svg style="left:11px;top:51px;" width="13" height="13" viewBox="0 0 13 13"><rect x="0.5" y="0.5" width="11" height="11.5" fill="none" stroke="#e9f1ec" stroke-width="0.9"/><path d="M0.5 3.5H11.5M0.5 6.5H11.5M0.5 9.5H11.5M3.5 0.5V12M6.5 0.5V12M9 0.5V12" stroke="#e9f1ec" stroke-width="0.6" stroke-dasharray="1 1"/><path d="M3 3.5L5.5 2L8 3.5L7.5 6.5L5.5 8L3.5 6.5Z" fill="#e9f1ec"/></svg><svg style="left:27px;top:55px;" width="6" height="4" viewBox="0 0 6 4"><path d="M0.5 0.5 L5.5 0.5 L3 3.5 Z" fill="#e9f1ec"/></svg><svg style="left:39px;top:51px;" width="12" height="13" viewBox="0 0 12 13"><rect x="0.5" y="0.5" width="11" height="11.5" rx="1" fill="none" stroke="#e9f1ec"/><path d="M0.5 3.2H11.5M0.5 9.3H11.5M6 0.5V3.2M6 9.3V12" stroke="#e9f1ec" stroke-width="0.8"/><path d="M2.5 6.2H9.5M4 5L2.5 6.2L4 7.4M8 5L9.5 6.2L8 7.4" stroke="#e9f1ec" stroke-width="0.8" fill="none"/></svg><svg style="left:59.5px;top:51px;" width="12" height="13" viewBox="0 0 12 13"><rect x="0.5" y="0.5" width="11" height="11.5" rx="1" fill="none" stroke="#e9f1ec"/><path d="M3 2.5V10.5M3 2.5H9.5" stroke="#e9f1ec" stroke-width="1.3" fill="none"/><path d="M5 9.5L9 5.5M7 5.5H9V7.5" stroke="#e9f1ec" stroke-width="0.9" fill="none"/></svg><svg style="left:80px;top:51px;" width="12" height="13" viewBox="0 0 12 13"><path d="M0.5 0.5H6L9 3.5V6M0.5 0.5V12H5" fill="none" stroke="#e9f1ec"/><rect x="4" y="6.5" width="7" height="4" fill="none" stroke="#e9f1ec"/><circle cx="6" cy="11.5" r="1" fill="#e9f1ec"/><circle cx="10" cy="11.5" r="1" fill="#e9f1ec"/></svg><svg style="left:103px;top:55px;" width="7" height="5" viewBox="0 0 7 5"><path d="M0.5 0.5H6.5M1 2.5L3.5 4.5L6 2.5Z" stroke="#e9f1ec" stroke-width="0.8" fill="#e9f1ec"/></svg><div class="t" style="left:152.5px;width:200px;text-align:center;top:50.5px;line-height:13px;font-size:9px;color:#a9c7b2;">报表1.xlsx&nbsp; -&nbsp; Excel</div><div class="t" style="left:323px;width:200px;text-align:center;top:50.5px;line-height:13px;font-size:9px;color:#d5e5da;">登录</div><svg style="left:458px;top:52px;" width="10" height="9" viewBox="0 0 10 9"><path d="M0.5 8.5V0.5H8.5V3.5H3.5V8.5H8.5V6" fill="none" stroke="#a9c8b3" stroke-width="0.9"/></svg><div style="left:493px;top:56px;width:7px;height:1px;background:#a9c8b3"></div><svg style="left:525.5px;top:52px;" width="8" height="9" viewBox="0 0 8 9"><path d="M0.5 0.5H7.5V8.5H0.5" fill="none" stroke="#a9c8b3" stroke-width="0.9"/></svg><svg style="left:558.5px;top:52.5px;" width="8" height="8" viewBox="0 0 8 8"><path d="M0.5 0.5L7.5 7.5M7.5 0.5L0.5 7.5" stroke="#a9c8b3" stroke-width="0.9"/></svg><div style="left:-200px;top:70.5px;width:208.8px;height:21px;background:#f3f3f3"></div><div class="t" style="left:-72.0px;width:200px;text-align:center;top:74.3px;line-height:13px;font-size:9px;color:#f2f7f4;">插入</div><div class="t" style="left:-25.625px;width:200px;text-align:center;top:74.3px;line-height:13px;font-size:9px;color:#f2f7f4;">页面布局</div><div class="t" style="left:21.25px;width:200px;text-align:center;top:74.3px;line-height:13px;font-size:9px;color:#f2f7f4;">公式</div><div class="t" style="left:59.875px;width:200px;text-align:center;top:74.3px;line-height:13px;font-size:9px;color:#f2f7f4;">数据</div><div class="t" style="left:97.75px;width:200px;text-align:center;top:74.3px;line-height:13px;font-size:9px;color:#f2f7f4;">审阅</div><div class="t" style="left:135.375px;width:200px;text-align:center;top:74.3px;line-height:13px;font-size:9px;color:#f2f7f4;">视图</div><div class="t" style="left:182.25px;width:200px;text-align:center;top:74.3px;line-height:13px;font-size:9px;color:#f2f7f4;">开发工具</div><svg style="left:320.5px;top:74.5px;" width="8" height="12" viewBox="0 0 8 12"><path d="M2 8 Q0.5 6 0.5 4.5 A3.5 3.5 0 0 1 7.5 4.5 Q7.5 6 6 8 Z M2.5 9.5H5.5M3 11H5" fill="none" stroke="#e9f1ec" stroke-width="0.9"/></svg><div class="t" style="left:332.8px;top:74.64999999999999px;line-height:12.3px;font-size:8.3px;color:#dfeae2;">告诉我你想要做什么</div><div style="left:525px;top:70px;width:43px;height:21.8px;background:#000;border-radius:3px"></div><svg style="left:530px;top:75px;" width="13" height="13" viewBox="0 0 13 13"><circle cx="5.5" cy="4" r="3.2" fill="none" stroke="#fff" stroke-width="1"/><path d="M0.8 12 Q1.5 7.5 5.5 7.5 Q8 7.5 9 9" fill="none" stroke="#fff" stroke-width="1"/><path d="M9.5 9V13M7.5 11H11.5" stroke="#fff" stroke-width="1"/></svg><div class="t" style="left:544px;top:74.5px;line-height:13px;font-size:9px;color:#f4f4f4;-webkit-text-stroke:0.2px #fff">共享</div><div style="left:-200px;top:91.5px;width:779.5px;height:68px;background:#f3f3f3"></div><div style="left:-200px;top:159.5px;width:779.5px;height:1px;background:#d4d4d4"></div><div class="rb" style="left:0;top:0"><div style="left:-200px;top:100.2px;width:305px;height:16.4px;background:#fff;border:1px solid #c6c6c6;box-sizing:border-box"></div><div class="t" style="left:-4.5px;top:101.8px;line-height:13px;font-size:9px;color:#5a3f5e;">等线</div><svg style="left:97px;top:106.5px;" width="6" height="4" viewBox="0 0 6 4"><path d="M0.5 0.5 L5.5 0.5 L3 3.5 Z" fill="#6a4f6e"/></svg><div style="left:105.8px;top:100.2px;width:28.6px;height:16.4px;background:#fff;border:1px solid #c6c6c6;box-sizing:border-box"></div><div class="t" style="left:108px;top:101.75px;line-height:13.5px;font-size:9.5px;color:#5a3f5e;letter-spacing:-0.3px">11</div><svg style="left:126px;top:106.5px;" width="6" height="4" viewBox="0 0 6 4"><path d="M0.5 0.5 L5.5 0.5 L3 3.5 Z" fill="#6a4f6e"/></svg><div class="t" style="left:42.5px;width:200px;text-align:center;top:101.5px;line-height:14px;font-size:10px;color:#3b6b4c;">A</div><svg style="left:146px;top:102.5px;" width="4" height="2" viewBox="0 0 4 2"><path d="M0 2L2 0L4 2Z" fill="#2b7cd3"/></svg><div class="t" style="left:58.30000000000001px;width:200px;text-align:center;top:102.05px;line-height:13.5px;font-size:9.5px;color:#3b6b4c;">A</div><svg style="left:161px;top:102.5px;" width="4" height="2" viewBox="0 0 4 2"><path d="M0 0L2 2L4 0Z" fill="#2b7cd3"/></svg><div class="t" style="left:-100.5px;width:200px;text-align:center;top:123.0px;line-height:14px;font-size:10px;color:#3b6b4c;font-weight:bold">B</div><div class="t" style="left:-84.5px;width:200px;text-align:center;top:123.0px;line-height:14px;font-size:10px;color:#5a3f5e;font-style:italic;font-family:Liberation Serif,serif">I</div><div class="t" style="left:-67.5px;width:200px;text-align:center;top:122.5px;line-height:14px;font-size:10px;color:#3b6b4c;font-weight:bold"><u>U</u></div><svg style="left:41.5px;top:128px;" width="6" height="4" viewBox="0 0 6 4"><path d="M0.5 0.5 L5.5 0.5 L3 3.5 Z" fill="#4f7f60"/></svg><div style="left:52.5px;top:122px;width:1px;height:17px;background:#d5d5d5"></div><svg style="left:58px;top:124.5px;" width="11" height="12" viewBox="0 0 11 12"><rect x="0.5" y="0.5" width="10" height="10" fill="none" stroke="#6a9a7a" stroke-dasharray="1.2 0.8"/><path d="M5.5 0.5V10.5M0.5 5.5H10.5" stroke="#9ab8a5" stroke-dasharray="1 1"/><path d="M0 10.8H11" stroke="#3b7a52" stroke-width="1.2"/></svg><svg style="left:72px;top:128px;" width="6" height="4" viewBox="0 0 6 4"><path d="M0.5 0.5 L5.5 0.5 L3 3.5 Z" fill="#4f7f60"/></svg><div style="left:83.5px;top:122px;width:1px;height:17px;background:#d5d5d5"></div><svg style="left:89px;top:121.5px;" width="12" height="11" viewBox="0 0 12 11"><path d="M1.5 6L5.5 2.5L9.5 6.5L6 10L1.5 6Z" fill="#fff" stroke="#4a8a5a" stroke-width="0.9"/><path d="M4.5 4V0.8" stroke="#7a4a80" stroke-width="1"/><path d="M10 6Q11.8 8 10.5 9.5" stroke="#2b7cd3" fill="none" stroke-width="1.4"/></svg><div style="left:88.6px;top:133.2px;width:11.5px;height:2.6px;background:#d8c84a"></div><svg style="left:103px;top:128px;" width="6" height="4" viewBox="0 0 6 4"><path d="M0.5 0.5 L5.5 0.5 L3 3.5 Z" fill="#4f7f60"/></svg><div class="t" style="left:19px;width:200px;text-align:center;top:122.05000000000001px;line-height:13.5px;font-size:9.5px;color:#3b6b4c;">A</div><div style="left:113px;top:133.2px;width:11.6px;height:2.6px;background:#d9372a"></div><svg style="left:127.5px;top:128px;" width="6" height="4" viewBox="0 0 6 4"><path d="M0.5 0.5 L5.5 0.5 L3 3.5 Z" fill="#4f7f60"/></svg><div style="left:138.6px;top:122px;width:1px;height:17px;background:#d5d5d5"></div><div class="t" style="left:48px;width:200px;text-align:center;top:121.0px;line-height:10px;font-size:6px;color:#6b5a6b;">wén</div><div class="t" style="left:48px;width:200px;text-align:center;top:127.5px;line-height:11px;font-size:7px;color:#2b7cd3;">文</div><svg style="left:158.5px;top:128px;" width="6" height="4" viewBox="0 0 6 4"><path d="M0.5 0.5 L5.5 0.5 L3 3.5 Z" fill="#4f7f60"/></svg><div class="t" style="left:-26.5px;width:200px;text-align:center;top:145.8px;line-height:13px;font-size:9px;color:#244f34;">字体</div><svg style="left:160.5px;top:149.5px;" width="6" height="6" viewBox="0 0 6 6"><path d="M0.5 5.5V0.5H5.5" fill="none" stroke="#aaa" stroke-width="0.7"/><path d="M1.8 1.8L5 5M2.8 5.5H5.5V2.8" fill="none" stroke="#4a8a9a" stroke-width="0.8"/></svg><div style="left:169.4px;top:95px;width:1px;height:61px;background:#d5d5d5"></div><div style="left:188px;top:94px;width:16px;height:32.7px;background:#d5d0d2"></div><svg style="left:175px;top:95px;" width="12" height="8" viewBox="0 0 12 8"><rect x="0" y="0.6" width="11" height="1.1" fill="#6f8f7b"/><rect x="1.5" y="3" width="8.5" height="1.6" fill="#aab8ae"/><rect x="0" y="5.6" width="11" height="1.1" fill="#6f8f7b"/></svg><svg style="left:191px;top:98px;" width="12" height="8" viewBox="0 0 12 8"><rect x="0" y="0.6" width="11" height="1.3" fill="#7a4a80"/><path d="M0 2.5H11L10 6.8H1Z" fill="#8fb09b"/></svg><svg style="left:207px;top:102px;" width="12" height="7" viewBox="0 0 12 7"><rect x="0" y="0.3" width="11" height="1" fill="#6f8f7b"/><rect x="0" y="2.7" width="11" height="1.1" fill="#6f8f7b"/><rect x="0" y="5" width="11" height="1.1" fill="#6f8f7b"/></svg><svg style="left:224px;top:95px;" width="13" height="12" viewBox="0 0 13 12"><rect x="0.5" y="0.5" width="7.5" height="4" fill="none" stroke="#6f8f7b" stroke-width="0.9"/><rect x="0.5" y="6.5" width="7.5" height="4" fill="none" stroke="#6f8f7b" stroke-width="0.9"/><path d="M2 2.5H9.5M2 8.5H4.5M9.5 1.5Q12.3 2.5 12 6Q11.5 8.5 9 8.5M10.3 7.3L9 8.5L10.3 9.7" fill="none" stroke="#2b7cd3" stroke-width="0.9"/></svg><svg style="left:175px;top:114.5px;" width="12" height="9" viewBox="0 0 12 9"><rect x="0" y="0.5" width="11" height="1.1" fill="#6f8f7b"/><rect x="0" y="2.6" width="7" height="1.1" fill="#6f8f7b"/><rect x="0" y="4.7" width="11" height="1.1" fill="#6f8f7b"/><rect x="0" y="6.8" width="7" height="1.1" fill="#6f8f7b"/></svg><svg style="left:191px;top:114.5px;" width="12" height="9" viewBox="0 0 12 9"><rect x="0" y="0.5" width="11" height="1.2" fill="#7a4a80"/><rect x="2" y="2.6" width="7" height="1.2" fill="#7a4a80"/><path d="M0 4.5H11L9 8.5H2Z" fill="#8fb09b"/></svg><svg style="left:207px;top:114.5px;" width="12" height="9" viewBox="0 0 12 9"><rect x="0" y="0.5" width="11" height="1.1" fill="#6f8f7b"/><rect x="3" y="2.6" width="8" height="1.1" fill="#6f8f7b"/><rect x="0" y="4.7" width="11" height="1.1" fill="#6f8f7b"/><rect x="3" y="6.8" width="8" height="1.1" fill="#6f8f7b"/></svg><svg style="left:224px;top:112.5px;" width="12" height="12" viewBox="0 0 12 12"><rect x="0.5" y="0.5" width="11" height="10.5" fill="none" stroke="#6f8f7b" stroke-width="0.9"/><path d="M0.5 3H11.5M0.5 8.5H11.5M6 0.5V3M6 8.5V11" stroke="#6f8f7b" stroke-width="0.8"/><path d="M2 5.8H10M3.3 4.6L2 5.8L3.3 7M8.7 4.6L10 5.8L8.7 7" fill="none" stroke="#2b7cd3" stroke-width="0.9"/><rect x="5.5" y="0" width="1" height="1.5" fill="#7a4a80"/><rect x="5.5" y="10" width="1" height="1.5" fill="#7a4a80"/></svg><svg style="left:239.5px;top:116px;" width="6" height="4" viewBox="0 0 6 4"><path d="M0.5 0.5 L5.5 0.5 L3 3.5 Z" fill="#4f7f60"/></svg><svg style="left:174.5px;top:130px;" width="12" height="11" viewBox="0 0 12 11"><rect x="0" y="0" width="11.5" height="1.1" fill="#6f8f7b"/><rect x="0" y="9.3" width="11.5" height="1.1" fill="#6f8f7b"/><rect x="6" y="2.5" width="5.5" height="5.5" fill="#c9c9c9"/><rect x="6" y="2.5" width="5.5" height="1" fill="#6f8f7b"/><path d="M0.5 5H5.5M2.5 3L0.5 5L2.5 7" fill="none" stroke="#2b7cd3" stroke-width="1.2"/></svg><svg style="left:190.5px;top:130px;" width="12" height="11" viewBox="0 0 12 11"><rect x="0" y="0" width="11.5" height="1.1" fill="#6f8f7b"/><rect x="0" y="9.3" width="11.5" height="1.1" fill="#6f8f7b"/><rect x="6" y="2.5" width="5.5" height="5.5" fill="#c9c9c9"/><rect x="6" y="2.5" width="5.5" height="1" fill="#6f8f7b"/><path d="M0 5H5M3 3L5 5L3 7" fill="none" stroke="#2b7cd3" stroke-width="1.2"/></svg><div style="left:207px;top:127px;width:1px;height:15px;background:#d5d5d5"></div><svg style="left:212.5px;top:129px;" width="13" height="13" viewBox="0 0 13 13"><path d="M1.5 6.5L5 3M3 8L6.5 4.5M4.5 2.5L7.5 5.5M2 5L5 8" fill="none" stroke="#6a8a76" stroke-width="1"/><path d="M3 12L11 4M9.5 3.5H11.5V5.5" fill="none" stroke="#7a5a7e" stroke-width="1"/></svg><svg style="left:226.5px;top:134px;" width="6" height="4" viewBox="0 0 6 4"><path d="M0.5 0.5 L5.5 0.5 L3 3.5 Z" fill="#4f7f60"/></svg><div class="t" style="left:104.30000000000001px;width:200px;text-align:center;top:145.8px;line-height:13px;font-size:9px;color:#244f34;">对齐方式</div><svg style="left:242px;top:149.5px;" width="6" height="6" viewBox="0 0 6 6"><path d="M0.5 5.5V0.5H5.5" fill="none" stroke="#aaa" stroke-width="0.7"/><path d="M1.8 1.8L5 5M2.8 5.5H5.5V2.8" fill="none" stroke="#4a8a9a" stroke-width="0.8"/></svg><div style="left:250.6px;top:95px;width:1px;height:61px;background:#d5d5d5"></div><div style="left:254.4px;top:94.3px;width:55.1px;height:16.4px;background:#fff;border:1px solid #c6c6c6;box-sizing:border-box"></div><div class="t" style="left:256.5px;top:96.6px;line-height:12.4px;font-size:8.4px;color:#244f34;letter-spacing:0.5px">常规</div><svg style="left:301px;top:101px;" width="6" height="4" viewBox="0 0 6 4"><path d="M0.5 0.5 L5.5 0.5 L3 3.5 Z" fill="#4f7f60"/></svg><svg style="left:256px;top:113px;" width="12" height="12" viewBox="0 0 12 12"><rect x="0.5" y="0.5" width="11" height="5" fill="#dbe8f5" stroke="#2b7cd3" stroke-width="0.8"/><circle cx="6" cy="3" r="1.5" fill="#2b7cd3"/><rect x="2" y="7" width="8" height="2" fill="#e8d878"/><rect x="2" y="10" width="6" height="2" fill="#e8d878"/></svg><svg style="left:270px;top:117.5px;" width="6" height="4" viewBox="0 0 6 4"><path d="M0.5 0.5 L5.5 0.5 L3 3.5 Z" fill="#4f7f60"/></svg><div class="t" style="left:186.5px;width:200px;text-align:center;top:112.25px;line-height:14.5px;font-size:10.5px;color:#3b5a48;">%</div><svg style="left:300.5px;top:117.5px;" width="3" height="4" viewBox="0 0 3 4"><path d="M1.5 0.5A1 1 0 0 1 2.5 1.5Q2.5 3 1 3.8" fill="#5a3f5e" stroke="#5a3f5e" stroke-width="0.8"/></svg><svg style="left:255px;top:129px;" width="13" height="13" viewBox="0 0 13 13"><text x="4" y="5.8" font-size="6.5" fill="#3b6b4c" font-family="Liberation Sans" textLength="6" lengthAdjust="spacingAndGlyphs">.0</text><text x="1.5" y="12" font-size="6.5" fill="#3b6b4c" font-family="Liberation Sans" textLength="9" lengthAdjust="spacingAndGlyphs">.00</text><path d="M0.5 3.5H4.5M2 2L0.5 3.5L2 5" stroke="#2b7cd3" fill="none" stroke-width="1"/></svg><svg style="left:272px;top:129px;" width="13" height="13" viewBox="0 0 13 13"><text x="2" y="5.8" font-size="6.5" fill="#3b6b4c" font-family="Liberation Sans" textLength="9" lengthAdjust="spacingAndGlyphs">.00</text><text x="5" y="12" font-size="6.5" fill="#5a3f5e" font-family="Liberation Sans" textLength="6" lengthAdjust="spacingAndGlyphs">.0</text><path d="M0.5 10H5M3.5 8.5L5 10L3.5 11.5" stroke="#2b7cd3" fill="none" stroke-width="1"/></svg><div class="t" style="left:176.5px;width:200px;text-align:center;top:145.8px;line-height:13px;font-size:9px;color:#244f34;">数字</div><svg style="left:304px;top:149.5px;" width="6" height="6" viewBox="0 0 6 6"><path d="M0.5 5.5V0.5H5.5" fill="none" stroke="#aaa" stroke-width="0.7"/><path d="M1.8 1.8L5 5M2.8 5.5H5.5V2.8" fill="none" stroke="#4a8a9a" stroke-width="0.8"/></svg><div style="left:313.4px;top:95px;width:1px;height:61px;background:#d5d5d5"></div><svg style="left:318.5px;top:96px;" width="12" height="12" viewBox="0 0 12 12"><rect x="0.5" y="0.5" width="10" height="10" fill="#fff" stroke="#9a9a9a" stroke-width="0.7"/><rect x="0" y="0" width="5" height="2.5" fill="#d9372a"/><rect x="0" y="3.5" width="5" height="2.5" fill="#3a9a8a"/><rect x="0" y="7" width="5" height="2.5" fill="#d9372a"/><path d="M5.5 3.5H10.5M5.5 7H8" stroke="#9a9a9a" stroke-width="0.7"/><rect x="6" y="6" width="5.5" height="5.5" fill="#fff" stroke="#444" stroke-width="0.8"/><path d="M7.5 8H10M7.5 9.8H10" stroke="#444" stroke-width="0.7"/></svg><div class="t" style="left:332.7px;top:96.6px;line-height:12.4px;font-size:8.4px;color:#244f34;letter-spacing:0.5px">条件格式</div><svg style="left:368.5px;top:101.5px;" width="6" height="4" viewBox="0 0 6 4"><path d="M0.5 0.5 L5.5 0.5 L3 3.5 Z" fill="#4f7f60"/></svg><svg style="left:318.5px;top:113px;" width="12" height="12" viewBox="0 0 12 12"><rect x="0.5" y="0.5" width="11" height="9" fill="#fff" stroke="#6f8f7b" stroke-width="0.8"/><path d="M0.5 3.5H11.5M4 0.5V9.5M8 0.5V9.5M0.5 6.5H11.5" stroke="#9fb8a8" stroke-width="0.6"/><path d="M3 11L9 5L11 6L5 12Z" fill="#2b7cd3"/></svg><div class="t" style="left:332.7px;top:113.1px;line-height:12.4px;font-size:8.4px;color:#244f34;letter-spacing:0.5px">套用表格格式</div><svg style="left:385.5px;top:117.5px;" width="6" height="4" viewBox="0 0 6 4"><path d="M0.5 0.5 L5.5 0.5 L3 3.5 Z" fill="#4f7f60"/></svg><svg style="left:318.5px;top:129px;" width="12" height="12" viewBox="0 0 12 12"><rect x="0.5" y="0.5" width="11" height="9" fill="#dbe8f5" stroke="#6f8f7b" stroke-width="0.8"/><path d="M3 11L9 5L11 6L5 12Z" fill="#2b7cd3"/></svg><div class="t" style="left:332.7px;top:129.10000000000002px;line-height:12.4px;font-size:8.4px;color:#244f34;letter-spacing:0.5px">单元格样式</div><svg style="left:377.5px;top:133.5px;" width="6" height="4" viewBox="0 0 6 4"><path d="M0.5 0.5 L5.5 0.5 L3 3.5 Z" fill="#4f7f60"/></svg><div class="t" style="left:255.5px;width:200px;text-align:center;top:145.8px;line-height:13px;font-size:9px;color:#244f34;">样式</div><div style="left:397.6px;top:95px;width:1px;height:61px;background:#d5d5d5"></div><svg style="left:404px;top:96px;" width="13" height="12" viewBox="0 0 13 12"><path d="M0.5 0.5H8.5V11.5H0.5ZM0.5 4H8.5M0.5 8H8.5M4.5 0.5V11.5" fill="none" stroke="#6f8f7b" stroke-width="0.8"/><rect x="4.5" y="4" width="8" height="4" fill="#fff" stroke="#6f8f7b" stroke-width="0.8"/><path d="M1.5 6H10M3 4.8L1.5 6L3 7.2" stroke="#2b7cd3" fill="none" stroke-width="0.9"/></svg><div class="t" style="left:417.8px;top:96.6px;line-height:12.4px;font-size:8.4px;color:#244f34;letter-spacing:0.5px">插入</div><svg style="left:441.5px;top:101.5px;" width="6" height="4" viewBox="0 0 6 4"><path d="M0.5 0.5 L5.5 0.5 L3 3.5 Z" fill="#4f7f60"/></svg><svg style="left:404px;top:113px;" width="13" height="12" viewBox="0 0 13 12"><path d="M0.5 0.5H8.5V11.5H0.5ZM0.5 4H8.5M0.5 8H8.5M4.5 0.5V11.5" fill="none" stroke="#6f8f7b" stroke-width="0.8"/><rect x="4.5" y="4" width="4" height="4" fill="#fff"/><path d="M7 2L11.5 6.5M11.5 2L7 6.5" stroke="#e0a020" stroke-width="1"/></svg><div class="t" style="left:417.8px;top:113.1px;line-height:12.4px;font-size:8.4px;color:#244f34;letter-spacing:0.5px">删除</div><svg style="left:441.5px;top:117.5px;" width="6" height="4" viewBox="0 0 6 4"><path d="M0.5 0.5 L5.5 0.5 L3 3.5 Z" fill="#4f7f60"/></svg><svg style="left:404px;top:129px;" width="12" height="12" viewBox="0 0 12 12"><rect x="0.5" y="0.5" width="11" height="11" fill="#fff" stroke="#6f8f7b" stroke-width="0.8"/><path d="M0.5 1H11.5" stroke="#2b7cd3" stroke-width="1.2"/><path d="M4 1V11.5M8 1V11.5M0.5 4H11.5M0.5 8H11.5" stroke="#9fb8a8" stroke-width="0.6" stroke-dasharray="1 1"/><rect x="4" y="4" width="4" height="4" fill="#2b7cd3" opacity="0.7"/></svg><div class="t" style="left:417.8px;top:129.10000000000002px;line-height:12.4px;font-size:8.4px;color:#244f34;letter-spacing:0.5px">格式</div><svg style="left:437.5px;top:133.5px;" width="6" height="4" viewBox="0 0 6 4"><path d="M0.5 0.5 L5.5 0.5 L3 3.5 Z" fill="#4f7f60"/></svg><div class="t" style="left:325.8px;width:200px;text-align:center;top:145.8px;line-height:13px;font-size:9px;color:#244f34;">单元格</div><div style="left:452.5px;top:95px;width:1px;height:61px;background:#d5d5d5"></div><svg style="left:457.5px;top:96px;" width="12" height="12" viewBox="0 0 12 12"><path d="M11 1.2H1.2L6.2 6L1.2 10.8H11" fill="none" stroke="#2e6b47" stroke-width="1.6"/></svg><svg style="left:472px;top:101.5px;" width="6" height="4" viewBox="0 0 6 4"><path d="M0.5 0.5 L5.5 0.5 L3 3.5 Z" fill="#4f7f60"/></svg><svg style="left:458.5px;top:112.5px;" width="12" height="12" viewBox="0 0 12 12"><rect x="0.5" y="0.5" width="10" height="11" fill="#fff" stroke="#6f8f7b" stroke-width="0.9"/><path d="M0.5 1.5H10.5" stroke="#7a5a7e" stroke-width="1.4"/><path d="M5.5 4V9.5M3 7L5.5 9.5L8 7" stroke="#2b7cd3" fill="none" stroke-width="1.2"/></svg><svg style="left:471.5px;top:117.5px;" width="6" height="4" viewBox="0 0 6 4"><path d="M0.5 0.5 L5.5 0.5 L3 3.5 Z" fill="#4f7f60"/></svg><svg style="left:459px;top:130px;" width="11" height="10" viewBox="0 0 11 10"><path d="M1 7L6 2L9 5L4 10Z" fill="#d8b8a8"/><path d="M1 7L4 10" stroke="#c49080"/></svg><svg style="left:471.5px;top:134px;" width="6" height="4" viewBox="0 0 6 4"><path d="M0.5 0.5 L5.5 0.5 L3 3.5 Z" fill="#4f7f60"/></svg><div class="t" style="left:387px;width:200px;text-align:center;top:92.5px;line-height:10px;font-size:6px;color:#2b7cd3;">A</div><div class="t" style="left:387px;width:200px;text-align:center;top:99.5px;line-height:10px;font-size:6px;color:#2b7cd3;">Z</div><svg style="left:489px;top:99px;" width="6" height="6" viewBox="0 0 6 6"><path d="M0 0H6L3.5 3V6H2.5V3Z" fill="#3b6b4c"/></svg><svg style="left:496.5px;top:100px;" width="6" height="4" viewBox="0 0 6 4"><path d="M0.5 0.5 L5.5 0.5 L3 3.5 Z" fill="#4f7f60"/></svg><svg style="left:484px;top:113.5px;" width="11" height="11" viewBox="0 0 11 11"><circle cx="6.5" cy="4.5" r="3.3" fill="none" stroke="#2b7cd3" stroke-width="1.3"/><path d="M4 7L1 10" stroke="#2b7cd3" stroke-width="1.8"/></svg><svg style="left:496.5px;top:117px;" width="6" height="4" viewBox="0 0 6 4"><path d="M0.5 0.5 L5.5 0.5 L3 3.5 Z" fill="#4f7f60"/></svg><div class="t" style="left:380.5px;width:200px;text-align:center;top:145.8px;line-height:13px;font-size:9px;color:#244f34;">编辑</div><div style="left:508px;top:95px;width:1px;height:61px;background:#d5d5d5"></div><svg style="left:516px;top:99.5px;" width="20" height="16" viewBox="0 0 20 16"><path d="M1 4H6L8 1H12L14 4H19V15.5H1Z" fill="#7d6b7e"/><circle cx="10" cy="9.5" r="3.7" fill="#eee"/><circle cx="10" cy="9.5" r="2.2" fill="#7d6b7e"/><rect x="2.5" y="5" width="2" height="1.3" fill="#eee"/></svg><div class="t" style="left:426.5px;width:200px;text-align:center;top:119.8px;line-height:12.4px;font-size:8.4px;color:#244f34;letter-spacing:0.5px">照相机</div><div class="t" style="left:426.5px;width:200px;text-align:center;top:146.05px;line-height:12.5px;font-size:8.5px;color:#244f34;font-weight:bold">xiangji</div><div style="left:544px;top:95px;width:1px;height:61px;background:#d0d0d0"></div><svg style="left:565px;top:150px;" width="8" height="5" viewBox="0 0 8 5"><path d="M0.5 4.5L4 1L7.5 4.5" fill="none" stroke="#555" stroke-width="1"/></svg></div><div style="left:-200px;top:160.5px;width:779.5px;height:47px;background:#e6e6e6"></div><div style="left:-200px;top:167px;width:204.5px;height:20.6px;background:#f9f9f9;border:1px solid #d0d0d0;box-sizing:border-box"></div><svg style="left:14px;top:173px;" width="3" height="10" viewBox="0 0 3 10"><circle cx="1.5" cy="1.5" r="0.8" fill="#999"/><circle cx="1.5" cy="5" r="0.8" fill="#999"/><circle cx="1.5" cy="8.5" r="0.8" fill="#999"/></svg><div style="left:27px;top:167px;width:78.5px;height:20.6px;background:#f7f7f7;border:1px solid #d4d4d4;box-sizing:border-box"></div><svg style="left:36px;top:173px;" width="8" height="8" viewBox="0 0 8 8"><path d="M0.5 0.5L7.5 7.5M7.5 0.5L0.5 7.5" stroke="#b5b5b5"/></svg><svg style="left:61px;top:173px;" width="10" height="8" viewBox="0 0 10 8"><path d="M0.5 4L3.5 7.5L9.5 0.5" fill="none" stroke="#b5b5b5" stroke-width="1.1"/></svg><div class="t" style="left:88px;top:169.0px;line-height:15px;font-size:11px;color:#3e5e4a;font-family:Liberation Serif,serif"><i>f</i><span style="font-size:8px;position:relative;top:1px"><i>x</i></span></div><div style="left:108.5px;top:167px;width:467px;height:20.6px;background:#f9f9f9;border:1px solid #d0d0d0;box-sizing:border-box"></div><svg style="left:565px;top:175px;" width="8" height="5" viewBox="0 0 8 5"><path d="M0.5 0.5L4 4L7.5 0.5" fill="none" stroke="#555" stroke-width="1"/></svg><div class="t" style="left:-126.0px;width:200px;text-align:center;top:193.55px;line-height:15.5px;font-size:11.5px;color:#2c5e3f;transform:scaleX(0.78)">A</div><div style="left:-0.6px;top:195px;width:1px;height:12px;background:#d2d2d2"></div><div class="t" style="left:-74.0px;width:200px;text-align:center;top:193.55px;line-height:15.5px;font-size:11.5px;color:#2c5e3f;transform:scaleX(0.78)">B</div><div style="left:51.4px;top:195px;width:1px;height:12px;background:#d2d2d2"></div><div class="t" style="left:-22.099999999999994px;width:200px;text-align:center;top:193.55px;line-height:15.5px;font-size:11.5px;color:#2c5e3f;transform:scaleX(0.78)">C</div><div style="left:103.2px;top:195px;width:1px;height:12px;background:#d2d2d2"></div><div class="t" style="left:29.650000000000006px;width:200px;text-align:center;top:193.55px;line-height:15.5px;font-size:11.5px;color:#2c5e3f;transform:scaleX(0.78)">D</div><div style="left:154.9px;top:195px;width:1px;height:12px;background:#d2d2d2"></div><div class="t" style="left:81.5px;width:200px;text-align:center;top:193.55px;line-height:15.5px;font-size:11.5px;color:#2c5e3f;transform:scaleX(0.78)">E</div><div style="left:206.9px;top:195px;width:1px;height:12px;background:#d2d2d2"></div><div class="t" style="left:133.4px;width:200px;text-align:center;top:193.55px;line-height:15.5px;font-size:11.5px;color:#2c5e3f;transform:scaleX(0.78)">F</div><div style="left:258.7px;top:195px;width:1px;height:12px;background:#d2d2d2"></div><div class="t" style="left:185.25px;width:200px;text-align:center;top:193.55px;line-height:15.5px;font-size:11.5px;color:#2c5e3f;transform:scaleX(0.78)">G</div><div style="left:310.59999999999997px;top:195px;width:1px;height:12px;background:#d2d2d2"></div><div class="t" style="left:237.0px;width:200px;text-align:center;top:193.55px;line-height:15.5px;font-size:11.5px;color:#2c5e3f;transform:scaleX(0.78)">H</div><div style="left:362.2px;top:195px;width:1px;height:12px;background:#d2d2d2"></div><div class="t" style="left:288.65px;width:200px;text-align:center;top:193.55px;line-height:15.5px;font-size:11.5px;color:#2c5e3f;transform:scaleX(0.78)">I</div><div style="left:413.9px;top:195px;width:1px;height:12px;background:#d2d2d2"></div><div class="t" style="left:340.55px;width:200px;text-align:center;top:193.55px;line-height:15.5px;font-size:11.5px;color:#2c5e3f;transform:scaleX(0.78)">J</div><div style="left:466.0px;top:195px;width:1px;height:12px;background:#d2d2d2"></div><div class="t" style="left:392.45px;width:200px;text-align:center;top:193.55px;line-height:15.5px;font-size:11.5px;color:#2c5e3f;transform:scaleX(0.78)">K</div><div style="left:517.6999999999999px;top:195px;width:1px;height:12px;background:#d2d2d2"></div><div class="t" style="left:444.15px;width:200px;text-align:center;top:193.55px;line-height:15.5px;font-size:11.5px;color:#2c5e3f;transform:scaleX(0.78)">L</div><div style="left:569.4px;top:195px;width:1px;height:12px;background:#d2d2d2"></div><div style="left:-200px;top:207.4px;width:763.5px;height:230px;background:#fcfcfc"></div><div style="left:-200px;top:227.4px;width:763.5px;height:1px;background:#e0e0e0"></div><div style="left:-200px;top:257px;width:763.5px;height:1px;background:#e0e0e0"></div><div style="left:-200px;top:286.5px;width:763.5px;height:1px;background:#e0e0e0"></div><div style="left:-200px;top:316px;width:763.5px;height:1px;background:#e0e0e0"></div><div style="left:-200px;top:345.5px;width:763.5px;height:1px;background:#e0e0e0"></div><div style="left:-200px;top:375px;width:763.5px;height:1px;background:#e0e0e0"></div><div style="left:-200px;top:404.6px;width:763.5px;height:1px;background:#e0e0e0"></div><div style="left:-200px;top:434px;width:763.5px;height:1px;background:#e0e0e0"></div><div style="left:-0.6px;top:207.4px;width:1px;height:230px;background:#e2e2e2"></div><div style="left:51.4px;top:207.4px;width:1px;height:230px;background:#e2e2e2"></div><div style="left:103.2px;top:207.4px;width:1px;height:230px;background:#e2e2e2"></div><div style="left:154.9px;top:207.4px;width:1px;height:230px;background:#e2e2e2"></div><div style="left:206.9px;top:207.4px;width:1px;height:230px;background:#e2e2e2"></div><div style="left:258.7px;top:207.4px;width:1px;height:230px;background:#e2e2e2"></div><div style="left:310.59999999999997px;top:207.4px;width:1px;height:230px;background:#e2e2e2"></div><div style="left:362.2px;top:207.4px;width:1px;height:230px;background:#e2e2e2"></div><div style="left:413.9px;top:207.4px;width:1px;height:230px;background:#e2e2e2"></div><div style="left:466.0px;top:207.4px;width:1px;height:230px;background:#e2e2e2"></div><div style="left:517.6999999999999px;top:207.4px;width:1px;height:230px;background:#e2e2e2"></div><div style="left:-200px;top:207px;width:764px;height:1px;background:#7fb08f"></div><div style="left:563.2px;top:207px;width:1px;height:230.5px;background:#8cb89a"></div><div style="left:48.7px;top:437px;width:515.3px;height:1px;background:#8cb89a"></div><div class="t" style="left:2.5px;top:210.75px;line-height:14.5px;font-size:10.5px;color:#111;-webkit-text-stroke:0.45px #111">1月份报表</div><div style="left:-200px;top:227.4px;width:303.8px;height:29.6px;background:#217346"></div><div class="t" style="left:-73.5px;width:200px;text-align:center;top:235.6px;line-height:14.8px;font-size:10.8px;color:#fff;-webkit-text-stroke:0.35px #fff">销售人员</div><div class="t" style="left:-22px;width:200px;text-align:center;top:235.6px;line-height:14.8px;font-size:10.8px;color:#fff;-webkit-text-stroke:0.35px #fff">销售业绩</div><div style="left:-200px;top:257px;width:303.8px;height:29.5px;background:#fcfcfc"></div><div class="t" style="left:-74px;width:200px;text-align:center;top:265.75px;line-height:15px;font-size:11px;color:#2a5a3e;">张磊</div><div class="t" style="left:-22px;width:200px;text-align:center;top:265.75px;line-height:15px;font-size:11px;color:#2a5a3e;">3600</div><div style="left:-200px;top:286.5px;width:303.8px;height:29.5px;background:#fcfcfc"></div><div class="t" style="left:-74px;width:200px;text-align:center;top:295.25px;line-height:15px;font-size:11px;color:#2a5a3e;">王艳萍</div><div class="t" style="left:-22px;width:200px;text-align:center;top:295.25px;line-height:15px;font-size:11px;color:#2a5a3e;">5000</div><div style="left:-200px;top:316px;width:303.8px;height:29.5px;background:#fcfcfc"></div><div class="t" style="left:-74px;width:200px;text-align:center;top:324.75px;line-height:15px;font-size:11px;color:#2a5a3e;">杨澜</div><div class="t" style="left:-22px;width:200px;text-align:center;top:324.75px;line-height:15px;font-size:11px;color:#2a5a3e;">3980</div><div style="left:-200px;top:345.5px;width:303.8px;height:29.5px;background:#fcfcfc"></div><div class="t" style="left:-74px;width:200px;text-align:center;top:354.25px;line-height:15px;font-size:11px;color:#2a5a3e;">周光</div><div class="t" style="left:-22px;width:200px;text-align:center;top:354.25px;line-height:15px;font-size:11px;color:#2a5a3e;">5000</div><div style="left:-200px;top:375px;width:303.8px;height:29.600000000000023px;background:#fcfcfc"></div><div class="t" style="left:-74px;width:200px;text-align:center;top:383.8px;line-height:15px;font-size:11px;color:#2a5a3e;">陈东琪</div><div class="t" style="left:-22px;width:200px;text-align:center;top:383.8px;line-height:15px;font-size:11px;color:#2a5a3e;">6500</div><div style="left:-200px;top:404.6px;width:303.8px;height:29.399999999999977px;background:#fcfcfc"></div><div class="t" style="left:-74px;width:200px;text-align:center;top:413.3px;line-height:15px;font-size:11px;color:#2a5a3e;">马小玲</div><div class="t" style="left:-22px;width:200px;text-align:center;top:413.3px;line-height:15px;font-size:11px;color:#2a5a3e;">7000</div><div style="left:-200px;top:256.5px;width:304.3px;height:1px;background:#2d4f3a"></div><div style="left:-200px;top:286.0px;width:304.3px;height:1px;background:#2d4f3a"></div><div style="left:-200px;top:315.5px;width:304.3px;height:1px;background:#2d4f3a"></div><div style="left:-200px;top:345.0px;width:304.3px;height:1px;background:#2d4f3a"></div><div style="left:-200px;top:374.5px;width:304.3px;height:1px;background:#2d4f3a"></div><div style="left:-200px;top:404.1px;width:304.3px;height:1px;background:#2d4f3a"></div><div style="left:-200px;top:433.5px;width:304.3px;height:1px;background:#2d4f3a"></div><div style="left:103.4px;top:207.4px;width:1.2px;height:227px;background:#6a5870"></div><div style="left:51.8px;top:227.4px;width:1px;height:207px;background:#2d4f3a"></div><div style="left:-0.3px;top:227.4px;width:1.4px;height:207px;background:#2a4a36"></div><div style="left:-200px;top:433.5px;width:304.5px;height:1.4px;background:#4a3a4a"></div><div style="left:564.2px;top:194px;width:15.3px;height:243px;background:#e3e3e3"></div><div style="left:566.5px;top:196px;width:10px;height:10.5px;background:#fff;border:1px solid #cfcfcf;box-sizing:border-box"></div><svg style="left:568.5px;top:199px;" width="6" height="4" viewBox="0 0 6 4"><path d="M0 3.5L3 0.5L6 3.5Z" fill="#217346"/></svg><div style="left:566.5px;top:206.5px;width:10px;height:0.0px;background:#d8d8d8"></div><div style="left:566.5px;top:206.5px;width:10px;height:152.5px;background:#fff;border:1px solid #d0d0d0;box-sizing:border-box"></div><div style="left:566.5px;top:359px;width:10px;height:69px;background:#d8d8d8"></div><div style="left:566.5px;top:427.5px;width:10px;height:10px;background:#fff;border:1px solid #cfcfcf;box-sizing:border-box"></div><div style="left:565.8px;top:196px;width:11.4px;height:241.5px;border:1px solid #a9c7b2;box-sizing:border-box"></div><svg style="left:568.5px;top:431px;" width="6" height="4" viewBox="0 0 6 4"><path d="M0 0.5L3 3.5L6 0.5Z" fill="#4a7a5c"/></svg><div style="left:-200px;top:438px;width:779.5px;height:19.5px;background:#e6e6e6"></div><div style="left:-200px;top:435px;width:249px;height:20px;background:#fcfcfc"></div><div style="left:48.7px;top:437px;width:1.2px;height:18px;background:#7faa8e"></div><div style="left:-200px;top:453.5px;width:249.9px;height:1.5px;background:#217346"></div><div class="t" style="left:-76px;width:200px;text-align:center;top:438.75px;line-height:14.5px;font-size:10.5px;color:#2c5e3f;transform:scaleX(0.92)">Sheet1</div><svg style="left:73px;top:441px;" width="12" height="12" viewBox="0 0 12 12"><circle cx="6" cy="6" r="5" fill="none" stroke="#6b8f78" stroke-width="1"/><path d="M6 3V9M3 6H9" stroke="#6b8f78" stroke-width="1"/></svg><svg style="left:318px;top:443px;" width="3" height="10" viewBox="0 0 3 10"><circle cx="1.5" cy="1.5" r="0.7" fill="#888"/><circle cx="1.5" cy="5" r="0.7" fill="#888"/><circle cx="1.5" cy="8.5" r="0.7" fill="#888"/></svg><div style="left:331px;top:442.5px;width:10.5px;height:10.5px;background:#fff;border:1px solid #a9c7b2;box-sizing:border-box"></div><svg style="left:334px;top:445px;" width="4" height="6" viewBox="0 0 4 6"><path d="M3.5 0L0.5 3L3.5 6Z" fill="#217346"/></svg><div style="left:341.5px;top:442.5px;width:192px;height:10.5px;background:#fff;border:1px solid #a9c7b2;box-sizing:border-box"></div><div style="left:533.5px;top:442.5px;width:20px;height:10.5px;background:#d8d8d8"></div><div style="left:554px;top:442.5px;width:11px;height:10.5px;background:#fff;border:1px solid #a9c7b2;box-sizing:border-box"></div><svg style="left:557.5px;top:445px;" width="4" height="6" viewBox="0 0 4 6"><path d="M0.5 0L3.5 3L0.5 6Z" fill="#4a7a5c"/></svg><div style="left:-200px;top:456.8px;width:779.5px;height:17px;background:#ededed"></div><div style="left:-200px;top:473px;width:779.5px;height:1.2px;background:#8cb89a"></div><div style="left:362.2px;top:457px;width:26.6px;height:16px;background:#d4d0d4"></div><svg style="left:369px;top:460px;" width="12" height="11" viewBox="0 0 12 11"><rect x="0.5" y="0.5" width="11" height="10" fill="none" stroke="#7a5a7e"/><path d="M0.5 3.8H11.5M0.5 7.2H11.5M4.2 0.5V10.5M7.8 0.5V10.5" stroke="#7a5a7e" stroke-width="0.9"/></svg><svg style="left:397px;top:460px;" width="12" height="11" viewBox="0 0 12 11"><rect x="0.5" y="0.5" width="11" height="10" fill="none" stroke="#6b8f78"/><rect x="2.5" y="2.5" width="7" height="6" fill="#c5d5ca" stroke="#6b8f78" stroke-width="0.8"/></svg><svg style="left:424px;top:460px;" width="12" height="11" viewBox="0 0 12 11"><path d="M0.5 0.5H11.5V10.5H0.5ZM5.5 0.5V5.5H0.5" fill="none" stroke="#6b8f78"/></svg><div style="left:446px;top:465px;width:6px;height:1.2px;background:#555"></div><div style="left:455px;top:465px;width:70px;height:1px;background:#b5b5b5"></div><div style="left:489.5px;top:461px;width:3px;height:9px;background:#3b7a52"></div><div class="t" style="left:432px;width:200px;text-align:center;top:458.5px;line-height:14px;font-size:10px;color:#555;font-weight:bold">+</div><div class="t" style="left:453.5px;width:200px;text-align:center;top:458.75px;line-height:13.5px;font-size:9.5px;color:#666;">100%</div><div style="left:578.5px;top:91.5px;width:1.2px;height:68.5px;background:#c9c9c9"></div><div style="left:578.5px;top:160px;width:1.2px;height:314px;background:#7fb08f"></div></div></div><div style="position:absolute;left:0;top:27px;width:603px;height:1px;background:#9cc2a8"></div></body></html>
